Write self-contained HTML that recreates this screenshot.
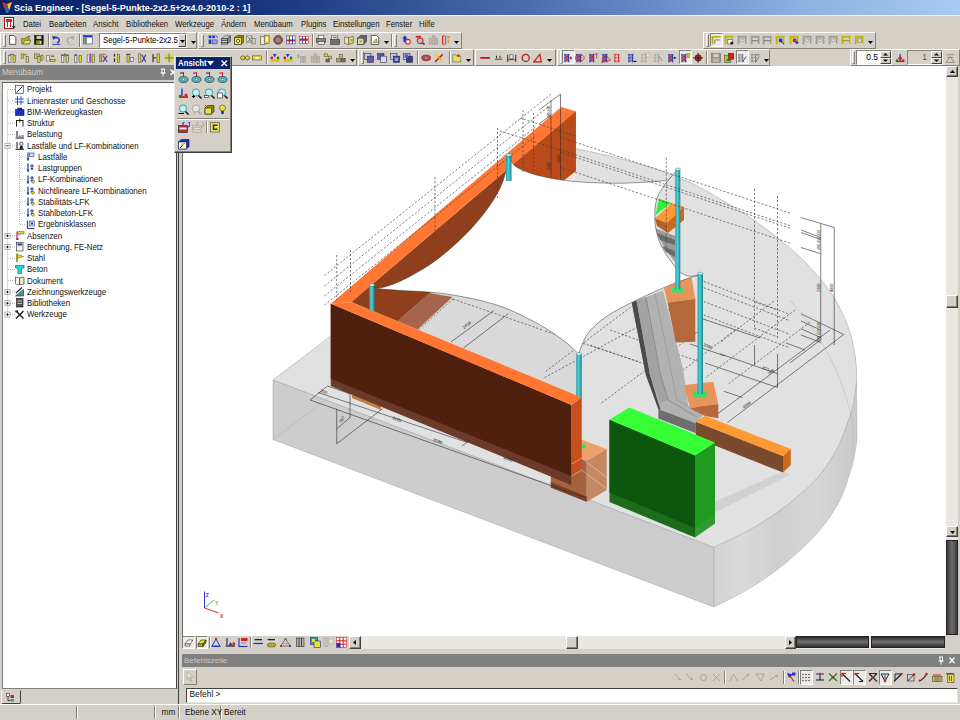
<!DOCTYPE html>
<html lang="de"><head><meta charset="utf-8"><title>Scia Engineer</title>
<style>
*{box-sizing:border-box;margin:0;padding:0}
html,body{width:960px;height:720px;overflow:hidden;background:#d4d0c8;font-family:"Liberation Sans",sans-serif;font-size:11px;color:#000}
.abs{position:absolute}
#title{left:0;top:0;width:960px;height:15px;background:linear-gradient(90deg,#0a246a 0%,#14317a 25%,#4a6db0 55%,#8fb4e4 85%,#a6caf0 100%);color:#fff;white-space:nowrap}
#title b{position:absolute;left:14px;top:0;font-size:9.8px;line-height:15px;transform:scaleX(.92);transform-origin:0 0;white-space:nowrap}
#menu{left:0;top:15px;width:960px;height:17px;background:#d4d0c8;border-top:1px solid #f4f2ee}
#menu span{position:absolute;top:2px;font-size:9px;line-height:12px;color:#111;white-space:nowrap;transform:scaleX(.86);transform-origin:0 0}
#leftp{left:0;top:66px;width:182px;height:640px;background:#d4d0c8}
#lhdr{left:0;top:66px;width:178px;height:13.5px;background:#808080;color:#d4d0c8;font-size:8.2px;line-height:13.5px;padding-left:2px}
#tree{left:2px;top:82px;width:175px;height:607px;background:#fff;border:1px solid #808080;border-right-color:#404040;border-top-color:#606060;overflow:hidden}
.ti{position:absolute;font-size:8.6px;line-height:12px;white-space:nowrap;color:#111;transform:scaleX(.92);transform-origin:0 50%}
.st{font-size:8.3px;line-height:12px;color:#111;white-space:nowrap}
#view{left:182px;top:66px;width:763.5px;height:569.5px;background:#fff;overflow:hidden;border-left:1px solid #6c6c6c}
</style></head><body>
<div class="abs" id="title"><b>Scia Engineer - [Segel-5-Punkte-2x2.5+2x4.0-2010-2 : 1]</b></div>
<svg class="abs" style="left:1px;top:1px" width="13" height="13" viewBox="0 0 13 13"><polygon points="1,1 6,3 4,9" fill="#e03020"/><polygon points="6,3 11,1 8,10" fill="#f0c020"/><polygon points="4,9 8,10 6,12.5" fill="#30a040"/><polygon points="6,3 8,10 4,9" fill="#3060d0"/></svg>
<div class="abs" id="menu">
<span style="left:23px">Datei</span><span style="left:48.5px">Bearbeiten</span><span style="left:93px">Ansicht</span><span style="left:125.5px">Bibliotheken</span><span style="left:174.5px">Werkzeuge</span><span style="left:221px">Ändern</span><span style="left:254px">Menübaum</span><span style="left:301px">Plugins</span><span style="left:333px">Einstellungen</span><span style="left:385.5px">Fenster</span><span style="left:419px">Hilfe</span>
</div>
<svg class="abs" style="left:4px;top:17px" width="12" height="13" viewBox="0 0 12 13"><rect x="0.5" y="0.5" width="9" height="11" fill="#fff" stroke="#802020" stroke-width="1"/><rect x="2" y="2" width="6" height="3" fill="#d02020"/><line x1="3.5" y1="5" x2="3.5" y2="10" stroke="#d02020"/><line x1="6.5" y1="5" x2="6.5" y2="10" stroke="#d02020"/><polygon points="8,9 11.5,9 9.8,12" fill="#222"/></svg>
<div class="abs" style="left:0px;top:32px;width:197px;height:17px;border:1px solid;border-color:#fff #848078 #848078 #fff"></div>
<div class="abs" style="left:198px;top:32px;width:264px;height:17px;border:1px solid;border-color:#fff #848078 #848078 #fff"></div>
<div class="abs" style="left:703px;top:32px;width:173px;height:17px;border:1px solid;border-color:#fff #848078 #848078 #fff"></div>
<div class="abs" style="left:0px;top:49px;width:357px;height:17px;border:1px solid;border-color:#fff #848078 #848078 #fff"></div>
<div class="abs" style="left:358px;top:49px;width:116px;height:17px;border:1px solid;border-color:#fff #848078 #848078 #fff"></div>
<div class="abs" style="left:475px;top:49px;width:81px;height:17px;border:1px solid;border-color:#fff #848078 #848078 #fff"></div>
<div class="abs" style="left:557px;top:49px;width:213px;height:17px;border:1px solid;border-color:#fff #848078 #848078 #fff"></div>
<div class="abs" style="left:850px;top:49px;width:110px;height:17px;border:1px solid;border-color:#fff #848078 #848078 #fff"></div>
<div class="abs" style="left:3px;top:34px;width:3px;height:13px;border-left:1px solid #fff;border-top:1px solid #fff;border-right:1px solid #848078;border-bottom:1px solid #848078"></div>
<div class="abs" style="left:3px;top:51px;width:3px;height:13px;border-left:1px solid #fff;border-top:1px solid #fff;border-right:1px solid #848078;border-bottom:1px solid #848078"></div>
<div class="abs" style="left:201px;top:34px;width:3px;height:13px;border-left:1px solid #fff;border-top:1px solid #fff;border-right:1px solid #848078;border-bottom:1px solid #848078"></div>
<div class="abs" style="left:706px;top:34px;width:3px;height:13px;border-left:1px solid #fff;border-top:1px solid #fff;border-right:1px solid #848078;border-bottom:1px solid #848078"></div>
<div class="abs" style="left:361px;top:51px;width:3px;height:13px;border-left:1px solid #fff;border-top:1px solid #fff;border-right:1px solid #848078;border-bottom:1px solid #848078"></div>
<div class="abs" style="left:560px;top:51px;width:3px;height:13px;border-left:1px solid #fff;border-top:1px solid #fff;border-right:1px solid #848078;border-bottom:1px solid #848078"></div>
<div class="abs" style="left:852px;top:51px;width:3px;height:13px;border-left:1px solid #fff;border-top:1px solid #fff;border-right:1px solid #848078;border-bottom:1px solid #848078"></div>
<svg class="abs" style="left:8px;top:34.8px;" width="10.3" height="9.8" viewBox="0 0 11 11"><polygon points="1.5,0.5 6,0.5 8.5,3 8.5,10.5 1.5,10.5" fill="#fff" stroke="#222" stroke-width="0.8"/></svg>
<svg class="abs" style="left:21px;top:34.8px;" width="10.3" height="9.8" viewBox="0 0 11 11"><polygon points="0.5,4 4,4 5,3 9,3 9,10 0.5,10" fill="#b8b820" stroke="#333" stroke-width="0.6"/><polygon points="2,10 4,6 11,6 9,10" fill="#e6e650" stroke="#333" stroke-width="0.6"/><line x1="7" y1="1.5" x2="10" y2="1.5" stroke="#333" stroke-width="0.8"/></svg>
<svg class="abs" style="left:34px;top:34.8px;" width="10.3" height="9.8" viewBox="0 0 11 11"><rect x="0.5" y="0.5" width="9.5" height="10" fill="#1a1a00" stroke="#000" stroke-width="0.6"/><rect x="2.5" y="1" width="5.5" height="3.5" fill="#c9c9c9"/><rect x="2" y="6" width="6.5" height="4.5" fill="#8a8a10"/><rect x="6" y="7" width="1.5" height="2.5" fill="#fff"/></svg>
<svg class="abs" style="left:52px;top:34.8px;" width="10.3" height="9.8" viewBox="0 0 11 11"><path d="M2,3.5 A3.6,3.2 0 1 1 5.5,9" fill="none" stroke="#1a2fb8" stroke-width="1.6"/><polygon points="0,1 4.5,2 1,5.5" fill="#1a2fb8"/><line x1="0.5" y1="10.5" x2="9" y2="10.5" stroke="#1a2fb8" stroke-width="1"/></svg>
<svg class="abs" style="left:65px;top:34.8px;" width="10.3" height="9.8" viewBox="0 0 11 11"><path d="M8,3.5 A3.6,3.2 0 1 0 4.5,9" fill="none" stroke="#a8a49c" stroke-width="1.5"/><polygon points="10,1 5.5,2 9,5.5" fill="#a8a49c"/><line x1="1" y1="10.5" x2="9.5" y2="10.5" stroke="#bdb9b0" stroke-width="1"/></svg>
<svg class="abs" style="left:83px;top:34.8px;" width="10.3" height="9.8" viewBox="0 0 11 11"><rect x="0.5" y="0.5" width="9.5" height="9.5" fill="#fff" stroke="#1428b0" stroke-width="0.6"/><rect x="0.5" y="0.5" width="9.5" height="2.2" fill="#1a33d0"/><rect x="1" y="2.7" width="3" height="7" fill="#7a7a7a"/></svg>
<div class="abs" style="left:47.5px;top:34px;width:2px;height:13px;border-left:1px solid #848078;border-right:1px solid #fff"></div>
<div class="abs" style="left:79px;top:34px;width:2px;height:13px;border-left:1px solid #848078;border-right:1px solid #fff"></div>
<div class="abs" style="left:99px;top:33px;width:88px;height:15px;background:#fff;border:1px solid;border-color:#848078 #fff #fff #848078;font-size:9px;line-height:13px;padding-left:3px;white-space:nowrap;overflow:hidden"><span style="display:inline-block;transform:scaleX(.86);transform-origin:0 0">Segel-5-Punkte-2x2.5</span></div>
<div class="abs" style="left:178px;top:34px;width:8px;height:13px;background:#d4d0c8;border:1px solid;border-color:#fff #404040 #404040 #fff"></div>
<svg class="abs" style="left:180px;top:40px" width="5" height="3" viewBox="0 0 5 3"><polygon points="0,0 5,0 2.5,3" fill="#000"/></svg>
<svg class="abs" style="left:190.5px;top:40.5px" width="5" height="3" viewBox="0 0 5 3"><polygon points="0,0 5,0 2.5,3" fill="#000"/></svg>
<svg class="abs" style="left:208px;top:34.8px;" width="10.3" height="9.8" viewBox="0 0 11 11"><rect x="0.5" y="0.5" width="3" height="3" fill="#2233cc"/><rect x="4.5" y="0.5" width="3" height="3" fill="#2233cc"/><rect x="0.5" y="5" width="3" height="5" fill="#2233cc"/><rect x="5" y="5.5" width="5" height="4.5" fill="#9aa0e0" stroke="#2233aa" stroke-width="0.6"/><line x1="8.5" y1="0.5" x2="10.5" y2="3" stroke="#2233cc" stroke-width="1"/></svg>
<svg class="abs" style="left:221px;top:34.8px;" width="10.3" height="9.8" viewBox="0 0 11 11"><polygon points="0.5,4 4,1 10.5,1 7,4" fill="#d8d8d8" stroke="#222" stroke-width="0.6"/><rect x="0.5" y="4" width="6.5" height="2" fill="#b0b0b0" stroke="#222" stroke-width="0.6"/><rect x="0.5" y="6.5" width="6.5" height="2" fill="#e8e8e8" stroke="#222" stroke-width="0.6"/><polygon points="7,4 10.5,1 10.5,7 7,10" fill="#888" stroke="#222" stroke-width="0.6"/><rect x="0.5" y="8.5" width="6.5" height="1.8" fill="#b0b0b0" stroke="#222" stroke-width="0.6"/></svg>
<svg class="abs" style="left:234px;top:34.8px;" width="10.3" height="9.8" viewBox="0 0 11 11"><polygon points="0.5,3 3,0.5 10.5,0.5 10.5,8 8,10.5 0.5,10.5" fill="#8a8a10" stroke="#221" stroke-width="0.6"/><rect x="0.5" y="3" width="7.5" height="7.5" fill="#e8e050" stroke="#221" stroke-width="0.6"/><circle cx="4.3" cy="6.7" r="1.8" fill="#fff" stroke="#222" stroke-width="0.8"/></svg>
<svg class="abs" style="left:246px;top:34.8px;" width="10.3" height="9.8" viewBox="0 0 11 11"><rect x="0.5" y="1" width="6" height="7" fill="#e8e6d8" stroke="#555" stroke-width="0.6"/><line x1="1.5" y1="2" x2="6" y2="8" stroke="#555" stroke-width="0.9"/><line x1="6" y1="2" x2="1.5" y2="8" stroke="#555" stroke-width="0.9"/><rect x="6.5" y="4" width="3.5" height="6" fill="#d4d0b0" stroke="#555" stroke-width="0.6"/></svg>
<svg class="abs" style="left:260px;top:34.8px;" width="10.3" height="9.8" viewBox="0 0 11 11"><rect x="0.5" y="2" width="5" height="8.5" fill="#e8e6e0" stroke="#444" stroke-width="0.6"/><rect x="5" y="0.5" width="5" height="9" fill="#e8d820" stroke="#554" stroke-width="0.6"/><rect x="6.5" y="2" width="2" height="5" fill="#fff"/></svg>
<svg class="abs" style="left:273px;top:34.8px;" width="10.3" height="9.8" viewBox="0 0 11 11"><circle cx="5.5" cy="5.5" r="5" fill="#a05048" stroke="#604038" stroke-width="0.8"/><circle cx="5.5" cy="5.5" r="2.8" fill="#8a8a88"/></svg>
<svg class="abs" style="left:286px;top:34.8px;" width="10.3" height="9.8" viewBox="0 0 11 11"><rect x="0.5" y="1" width="9.5" height="9" fill="#fff" stroke="#2233aa" stroke-width="0.6"/><rect x="0.5" y="5" width="9.5" height="2.2" fill="#d02020"/><line x1="3.5" y1="1" x2="3.5" y2="10" stroke="#2233aa" stroke-width="1"/><line x1="7" y1="1" x2="7" y2="10" stroke="#2233aa" stroke-width="1"/><rect x="1" y="1" width="2" height="2" fill="#e8d820"/></svg>
<svg class="abs" style="left:299px;top:34.8px;" width="10.3" height="9.8" viewBox="0 0 11 11"><rect x="0.5" y="1.5" width="9.5" height="8" fill="#fff" stroke="#d02020" stroke-width="0.6"/><rect x="0.5" y="4" width="9.5" height="2.5" fill="#d02020"/><line x1="3.5" y1="1.5" x2="3.5" y2="9.5" stroke="#2233aa" stroke-width="1"/><line x1="7" y1="1.5" x2="7" y2="9.5" stroke="#2233aa" stroke-width="1"/></svg>
<svg class="abs" style="left:316px;top:34.8px;" width="10.3" height="9.8" viewBox="0 0 11 11"><rect x="2.5" y="0.5" width="6" height="4" fill="#fff" stroke="#333" stroke-width="0.6"/><rect x="0.5" y="4" width="10" height="4.5" fill="#8a8a8a" stroke="#222" stroke-width="0.6"/><rect x="2" y="7.5" width="7" height="3" fill="#e8e8e8" stroke="#333" stroke-width="0.6"/></svg>
<svg class="abs" style="left:330px;top:34.8px;" width="10.3" height="9.8" viewBox="0 0 11 11"><rect x="1.5" y="1" width="7" height="5" fill="#e8e8e8" stroke="#333" stroke-width="0.6"/><rect x="0.5" y="5" width="10" height="5.5" fill="#707070" stroke="#222" stroke-width="0.6"/><line x1="3" y1="3" x2="7" y2="3" stroke="#333" stroke-width="0.8"/></svg>
<svg class="abs" style="left:344px;top:34.8px;" width="10.3" height="9.8" viewBox="0 0 11 11"><polygon points="0.5,2 5,3 5,10.5 0.5,9.5" fill="#f0e8b0" stroke="#332" stroke-width="0.6"/><polygon points="5,3 10,1.5 10,9 5,10.5" fill="#e8e080" stroke="#332" stroke-width="0.6"/><rect x="6.5" y="4.5" width="3" height="3" fill="#b8b020"/></svg>
<svg class="abs" style="left:357px;top:34.8px;" width="10.3" height="9.8" viewBox="0 0 11 11"><polygon points="0.5,3.5 3.5,0.5 10.5,0.5 10.5,7.5 7.5,10.5 0.5,10.5" fill="#6a6a6a" stroke="#222" stroke-width="0.6"/><rect x="0.5" y="3.5" width="7" height="7" fill="#d8d8c0" stroke="#222" stroke-width="0.6"/><rect x="2.5" y="5.5" width="3" height="3" fill="#c8c020"/></svg>
<svg class="abs" style="left:370px;top:34.8px;" width="10.3" height="9.8" viewBox="0 0 11 11"><polygon points="1,0.5 7,0.5 9.5,3 9.5,10.5 1,10.5" fill="#fff" stroke="#222" stroke-width="0.8"/><polygon points="3,8.5 7,4 8,8.5" fill="#d9d92a" stroke="#554" stroke-width="0.6"/></svg>
<svg class="abs" style="left:401px;top:34.8px;" width="10.3" height="9.8" viewBox="0 0 11 11"><polygon points="1,4 4,0.5 7,4 5.5,4 5.5,8 2.5,8 2.5,4" fill="#2233cc"/><circle cx="7.5" cy="7.5" r="2.6" fill="#fff" stroke="#d02020" stroke-width="1.2"/></svg>
<svg class="abs" style="left:414.5px;top:34.8px;" width="10.3" height="9.8" viewBox="0 0 11 11"><rect x="0.5" y="1" width="6" height="2" fill="#d02020"/><circle cx="5.5" cy="6.5" r="3.2" fill="#9ad0e0" stroke="#d02020" stroke-width="1.2"/><line x1="8" y1="9" x2="10.5" y2="10.5" stroke="#222" stroke-width="1.4"/></svg>
<svg class="abs" style="left:428px;top:34.8px;" width="10.3" height="9.8" viewBox="0 0 11 11"><rect x="1" y="3.5" width="2.4" height="7" fill="#bdb9b0" stroke="#9a968e" stroke-width="0.6"/><rect x="5" y="1" width="2.4" height="9.5" fill="#bdb9b0" stroke="#9a968e" stroke-width="0.6"/><rect x="8.2" y="3.5" width="2" height="7" fill="#bdb9b0" stroke="#9a968e" stroke-width="0.6"/></svg>
<svg class="abs" style="left:441px;top:34.8px;" width="10.3" height="9.8" viewBox="0 0 11 11"><line x1="1.5" y1="1" x2="1.5" y2="10.5" stroke="#d02020" stroke-width="1.2"/><line x1="1.5" y1="1" x2="4" y2="1" stroke="#d02020" stroke-width="1"/><line x1="1.5" y1="10.5" x2="4" y2="10.5" stroke="#d02020" stroke-width="1"/><line x1="5" y1="1" x2="5" y2="10.5" stroke="#555" stroke-width="1"/><rect x="7" y="1" width="2.5" height="2.5" fill="#d09020"/><line x1="8" y1="5" x2="8" y2="9" stroke="#d09020" stroke-width="1.2"/></svg>
<div class="abs" style="left:312px;top:34px;width:2px;height:13px;border-left:1px solid #848078;border-right:1px solid #fff"></div>
<svg class="abs" style="left:384px;top:41px" width="5" height="3" viewBox="0 0 5 3"><polygon points="0,0 5,0 2.5,3" fill="#000"/></svg>
<div class="abs" style="left:391px;top:34px;width:2px;height:13px;border-left:1px solid #848078;border-right:1px solid #fff"></div>
<div class="abs" style="left:394px;top:34px;width:3px;height:13px;border-left:1px solid #fff;border-top:1px solid #fff;border-right:1px solid #848078;border-bottom:1px solid #848078"></div>
<svg class="abs" style="left:454px;top:41px" width="5" height="3" viewBox="0 0 5 3"><polygon points="0,0 5,0 2.5,3" fill="#000"/></svg>
<div class="abs" style="left:710px;top:33px;width:13px;height:14px;background:#ecebe6;border:1px solid;border-color:#848078 #fff #fff #848078"></div>
<svg class="abs" style="left:711px;top:34.8px;" width="10.3" height="9.8" viewBox="0 0 11 11"><line x1="1.5" y1="1.5" x2="1.5" y2="10.5" stroke="#b8b800" stroke-width="2.1"/><line x1="0.5" y1="2" x2="10.5" y2="2" stroke="#b8b800" stroke-width="2.1"/><line x1="4" y1="5.5" x2="10" y2="5.5" stroke="#555" stroke-width="0.8"/><line x1="4" y1="5.5" x2="4" y2="10" stroke="#555" stroke-width="0.8"/></svg>
<svg class="abs" style="left:724px;top:34.8px;" width="10.3" height="9.8" viewBox="0 0 11 11"><line x1="1.5" y1="1.5" x2="1.5" y2="10.5" stroke="#b8b800" stroke-width="2.1"/><line x1="0.5" y1="2" x2="10.5" y2="2" stroke="#b8b800" stroke-width="2.1"/><rect x="4" y="5" width="5.5" height="5" fill="#fff" stroke="#333" stroke-width="0.6"/><circle cx="8.5" cy="9" r="1.8" fill="#223"/></svg>
<svg class="abs" style="left:736.5px;top:34.8px;" width="10.3" height="9.8" viewBox="0 0 11 11"><line x1="1.5" y1="1.5" x2="1.5" y2="10.5" stroke="#a09c94" stroke-width="2.1"/><line x1="0.5" y1="2" x2="10.5" y2="2" stroke="#a09c94" stroke-width="2.1"/><line x1="9.5" y1="2" x2="9.5" y2="10" stroke="#a09c94" stroke-width="1.6"/><rect x="4" y="4.5" width="3.5" height="3" fill="#e8e6e0" stroke="#8a8680" stroke-width="0.6"/></svg>
<svg class="abs" style="left:749.5px;top:34.8px;" width="10.3" height="9.8" viewBox="0 0 11 11"><line x1="1.5" y1="1.5" x2="1.5" y2="10.5" stroke="#a09c94" stroke-width="2.1"/><line x1="0.5" y1="2" x2="10.5" y2="2" stroke="#a09c94" stroke-width="2.1"/><line x1="9.5" y1="2" x2="9.5" y2="10" stroke="#a09c94" stroke-width="1.6"/><line x1="1.5" y1="6.5" x2="9.5" y2="6.5" stroke="#7a7670" stroke-width="1.2"/></svg>
<svg class="abs" style="left:762px;top:34.8px;" width="10.3" height="9.8" viewBox="0 0 11 11"><line x1="1.5" y1="1.5" x2="1.5" y2="10.5" stroke="#a09c94" stroke-width="2.1"/><line x1="0.5" y1="2" x2="10.5" y2="2" stroke="#a09c94" stroke-width="2.1"/><line x1="9.5" y1="2" x2="9.5" y2="10" stroke="#a09c94" stroke-width="1.6"/><line x1="1.5" y1="6.5" x2="9.5" y2="6.5" stroke="#7a7670" stroke-width="1.2"/></svg>
<svg class="abs" style="left:775px;top:34.8px;" width="10.3" height="9.8" viewBox="0 0 11 11"><line x1="1.5" y1="1.5" x2="1.5" y2="10.5" stroke="#b8b800" stroke-width="2.1"/><line x1="0.5" y1="2" x2="10.5" y2="2" stroke="#b8b800" stroke-width="2.1"/><rect x="4" y="4" width="4" height="4" fill="#2233cc"/><line x1="9.5" y1="2" x2="9.5" y2="10" stroke="#b8b800" stroke-width="1.4"/><line x1="6" y1="7" x2="10" y2="10.5" stroke="#222" stroke-width="1"/></svg>
<svg class="abs" style="left:788.5px;top:34.8px;" width="10.3" height="9.8" viewBox="0 0 11 11"><line x1="1.5" y1="1.5" x2="1.5" y2="10.5" stroke="#b8b800" stroke-width="2.1"/><line x1="0.5" y1="2" x2="10.5" y2="2" stroke="#b8b800" stroke-width="2.1"/><rect x="4" y="4" width="4" height="4" fill="#d02020"/><line x1="9.5" y1="2" x2="9.5" y2="10" stroke="#b8b800" stroke-width="1.4"/><circle cx="8.5" cy="8.5" r="1.6" fill="#2233cc"/></svg>
<svg class="abs" style="left:801.5px;top:34.8px;" width="10.3" height="9.8" viewBox="0 0 11 11"><line x1="1.5" y1="1.5" x2="1.5" y2="10.5" stroke="#a09c94" stroke-width="2.1"/><line x1="0.5" y1="2" x2="10.5" y2="2" stroke="#a09c94" stroke-width="2.1"/><line x1="9.5" y1="2" x2="9.5" y2="10" stroke="#a09c94" stroke-width="1.6"/><rect x="4" y="4.5" width="3.5" height="3" fill="#e8e6e0" stroke="#8a8680" stroke-width="0.6"/></svg>
<svg class="abs" style="left:814.5px;top:34.8px;" width="10.3" height="9.8" viewBox="0 0 11 11"><line x1="1.5" y1="1.5" x2="1.5" y2="10.5" stroke="#a09c94" stroke-width="2.1"/><line x1="0.5" y1="2" x2="10.5" y2="2" stroke="#a09c94" stroke-width="2.1"/><line x1="9.5" y1="2" x2="9.5" y2="10" stroke="#a09c94" stroke-width="1.6"/><rect x="4" y="4.5" width="3.5" height="3" fill="#e8e6e0" stroke="#8a8680" stroke-width="0.6"/></svg>
<svg class="abs" style="left:827.5px;top:34.8px;" width="10.3" height="9.8" viewBox="0 0 11 11"><line x1="1.5" y1="1.5" x2="1.5" y2="10.5" stroke="#a09c94" stroke-width="2.1"/><line x1="0.5" y1="2" x2="10.5" y2="2" stroke="#a09c94" stroke-width="2.1"/><line x1="9.5" y1="2" x2="9.5" y2="10" stroke="#a09c94" stroke-width="1.6"/><rect x="4" y="4.5" width="3.5" height="3" fill="#e8e6e0" stroke="#8a8680" stroke-width="0.6"/></svg>
<svg class="abs" style="left:840.5px;top:34.8px;" width="10.3" height="9.8" viewBox="0 0 11 11"><line x1="1.5" y1="1.5" x2="1.5" y2="10.5" stroke="#b8b800" stroke-width="2.1"/><line x1="0.5" y1="2" x2="10.5" y2="2" stroke="#b8b800" stroke-width="2.1"/><line x1="9.5" y1="2" x2="9.5" y2="10" stroke="#b8b800" stroke-width="1.4"/><line x1="1.5" y1="6.5" x2="9.5" y2="6.5" stroke="#8a8a00" stroke-width="1"/></svg>
<svg class="abs" style="left:854px;top:34.8px;" width="10.3" height="9.8" viewBox="0 0 11 11"><line x1="1.5" y1="1.5" x2="1.5" y2="10.5" stroke="#b8b800" stroke-width="2.1"/><line x1="0.5" y1="2" x2="10.5" y2="2" stroke="#b8b800" stroke-width="2.1"/><line x1="9.5" y1="2" x2="9.5" y2="10" stroke="#b8b800" stroke-width="1.4"/><rect x="3.5" y="4" width="4.5" height="4.5" fill="#d4d0c8" stroke="#777" stroke-width="0.6"/></svg>
<svg class="abs" style="left:867.5px;top:41px" width="5" height="3" viewBox="0 0 5 3"><polygon points="0,0 5,0 2.5,3" fill="#000"/></svg>
<div class="abs" style="left:561.5px;top:50px;width:13px;height:14px;background:#ecebe6;border:1px solid;border-color:#848078 #fff #fff #848078"></div>
<div class="abs" style="left:679px;top:50px;width:13px;height:14px;background:#ecebe6;border:1px solid;border-color:#848078 #fff #fff #848078"></div>
<div class="abs" style="left:735.5px;top:50px;width:13px;height:14px;background:#ecebe6;border:1px solid;border-color:#848078 #fff #fff #848078"></div>
<svg class="abs" style="left:7px;top:52.8px;" width="10.3" height="9.8" viewBox="0 0 11 11"><rect x="1.5" y="3" width="2.6" height="7.5" fill="#e9e9d0" stroke="#444" stroke-width="0.6"/><rect x="6.5" y="3" width="2.6" height="7.5" fill="#d9d92a" stroke="#444" stroke-width="0.6"/><line x1="2.5" y1="1.5" x2="8" y2="1.5" stroke="#444" stroke-width="0.8"/></svg>
<svg class="abs" style="left:20px;top:52.8px;" width="10.3" height="9.8" viewBox="0 0 11 11"><rect x="1" y="1" width="2.6" height="5" fill="#d9d92a" stroke="#444" stroke-width="0.6"/><rect x="6.5" y="4" width="2.6" height="6.5" fill="#d9d92a" stroke="#444" stroke-width="0.6"/><line x1="4" y1="2" x2="7" y2="2" stroke="#333" stroke-width="0.8"/></svg>
<svg class="abs" style="left:33.5px;top:52.8px;" width="10.3" height="9.8" viewBox="0 0 11 11"><rect x="0.5" y="1" width="2.6" height="5" fill="#d9d92a" stroke="#444" stroke-width="0.6"/><rect x="4" y="4" width="2.6" height="6.5" fill="#d9d92a" stroke="#444" stroke-width="0.6"/><rect x="7.5" y="3" width="2.4" height="5" fill="#d9d92a" stroke="#444" stroke-width="0.6"/><line x1="5.5" y1="0.5" x2="5.5" y2="3" stroke="#22c" stroke-width="1"/></svg>
<svg class="abs" style="left:46px;top:52.8px;" width="10.3" height="9.8" viewBox="0 0 11 11"><rect x="0.5" y="3" width="3" height="6" fill="#e9e9d0" stroke="#555" stroke-width="0.6"/><rect x="4.5" y="7" width="5.5" height="2.5" fill="#d9d92a" stroke="#444" stroke-width="0.6"/><line x1="5" y1="3.5" x2="9" y2="3.5" stroke="#333" stroke-width="1"/></svg>
<svg class="abs" style="left:59.5px;top:52.8px;" width="10.3" height="9.8" viewBox="0 0 11 11"><rect x="1.5" y="3" width="2.6" height="7.5" fill="#e4e4d8" stroke="#444" stroke-width="0.6"/><rect x="6.5" y="3" width="2.6" height="7.5" fill="#d9d92a" stroke="#444" stroke-width="0.6"/><line x1="1" y1="2" x2="9.5" y2="2" stroke="#444" stroke-width="0.8"/><line x1="5" y1="0.5" x2="5" y2="4" stroke="#444" stroke-width="0.8"/></svg>
<svg class="abs" style="left:72.5px;top:52.8px;" width="10.3" height="9.8" viewBox="0 0 11 11"><rect x="1.5" y="3" width="2.6" height="7.5" fill="#e4e4d8" stroke="#444" stroke-width="0.6"/><rect x="6.5" y="3" width="2.6" height="7.5" fill="#d9d92a" stroke="#444" stroke-width="0.6"/><circle cx="2.8" cy="1.8" r="1" fill="#33c"/></svg>
<svg class="abs" style="left:85.5px;top:52.8px;" width="10.3" height="9.8" viewBox="0 0 11 11"><rect x="1" y="2" width="2.6" height="8.5" fill="#e4e4d8" stroke="#444" stroke-width="0.6"/><rect x="6.5" y="2" width="2.6" height="8.5" fill="#d9d92a" stroke="#444" stroke-width="0.6"/><line x1="5" y1="0.5" x2="5" y2="11" stroke="#a030c0" stroke-width="1.2"/></svg>
<svg class="abs" style="left:98.5px;top:52.8px;" width="10.3" height="9.8" viewBox="0 0 11 11"><rect x="0.5" y="2" width="2.4" height="8" fill="#b0b040" stroke="#555" stroke-width="0.6"/><line x1="4" y1="3" x2="9" y2="10" stroke="#44a" stroke-width="1.2"/><line x1="9" y1="3" x2="4" y2="10" stroke="#44a" stroke-width="1.2"/><line x1="3" y1="1.5" x2="7" y2="1.5" stroke="#c33" stroke-width="1"/></svg>
<svg class="abs" style="left:111.5px;top:52.8px;" width="10.3" height="9.8" viewBox="0 0 11 11"><rect x="6" y="1.5" width="2.4" height="9" fill="#d9d92a" stroke="#444" stroke-width="0.6"/><line x1="2.5" y1="1" x2="2.5" y2="4" stroke="#222" stroke-width="1.4"/><line x1="2.5" y1="6" x2="2.5" y2="10" stroke="#222" stroke-width="1.4"/></svg>
<svg class="abs" style="left:125px;top:52.8px;" width="10.3" height="9.8" viewBox="0 0 11 11"><rect x="2" y="1.5" width="2.4" height="9" fill="#d9d92a" stroke="#444" stroke-width="0.6"/><rect x="5.5" y="5" width="3.5" height="4.5" fill="#e4e4ff" stroke="#33a" stroke-width="0.6"/><line x1="1" y1="1.5" x2="6" y2="1.5" stroke="#222" stroke-width="0.8"/></svg>
<svg class="abs" style="left:138px;top:52.8px;" width="10.3" height="9.8" viewBox="0 0 11 11"><rect x="0.5" y="1" width="2.4" height="9.5" fill="#d9d92a" stroke="#444" stroke-width="0.6"/><line x1="4" y1="2" x2="8.5" y2="10" stroke="#339" stroke-width="1.2"/><line x1="8.5" y1="2" x2="4" y2="10" stroke="#339" stroke-width="1.2"/></svg>
<svg class="abs" style="left:151px;top:52.8px;" width="10.3" height="9.8" viewBox="0 0 11 11"><rect x="6.5" y="1" width="2.6" height="10" fill="#d9d92a" stroke="#444" stroke-width="0.6"/><line x1="2" y1="1" x2="2" y2="10.5" stroke="#222" stroke-width="1.2"/><line x1="2" y1="5.5" x2="6" y2="5.5" stroke="#222" stroke-width="1"/></svg>
<svg class="abs" style="left:164px;top:52.8px;" width="10.3" height="9.8" viewBox="0 0 11 11"><line x1="0.5" y1="5.5" x2="10.5" y2="5.5" stroke="#8a8a00" stroke-width="1.4"/><line x1="5.5" y1="0.5" x2="5.5" y2="10.5" stroke="#8a8a00" stroke-width="1.4"/><rect x="1" y="1.5" width="3" height="2.5" fill="#d9d92a"/><rect x="7" y="1.5" width="3" height="2.5" fill="#d9d92a"/><rect x="1" y="7" width="3" height="2.5" fill="#d9d92a"/><rect x="7" y="7" width="3" height="2.5" fill="#d9d92a"/></svg>
<svg class="abs" style="left:240px;top:52.8px;" width="10.3" height="9.8" viewBox="0 0 11 11"><circle cx="2.7" cy="5.5" r="2.3" fill="#e9d820" stroke="#444" stroke-width="0.8"/><circle cx="8" cy="5.5" r="2.3" fill="#e9d820" stroke="#444" stroke-width="0.8"/></svg>
<svg class="abs" style="left:252px;top:52.8px;" width="10.3" height="9.8" viewBox="0 0 11 11"><rect x="0.5" y="3.2" width="10" height="4.6" fill="#e9d820" stroke="#444" stroke-width="0.6"/><rect x="3.5" y="4.4" width="4" height="2.2" fill="#f8f8f8"/></svg>
<svg class="abs" style="left:270px;top:52.8px;" width="10.3" height="9.8" viewBox="0 0 11 11"><line x1="0.5" y1="8.5" x2="10.5" y2="8.5" stroke="#e0c000" stroke-width="2.4"/><polygon points="3,1 7,1 5,5" fill="#2233cc"/><rect x="0.5" y="4" width="2.5" height="3" fill="#c02020"/><rect x="7.5" y="4" width="2.5" height="3" fill="#208020"/></svg>
<svg class="abs" style="left:283px;top:52.8px;" width="10.3" height="9.8" viewBox="0 0 11 11"><line x1="0.5" y1="8.5" x2="10.5" y2="8.5" stroke="#e0c000" stroke-width="2.4"/><polygon points="3,1 7,1 5,5" fill="#2233cc"/><rect x="0.5" y="4" width="2.5" height="3" fill="#c02020"/><rect x="7.5" y="4" width="2.5" height="3" fill="#208020"/></svg>
<svg class="abs" style="left:296px;top:52.8px;" width="10.3" height="9.8" viewBox="0 0 11 11"><rect x="1" y="1.5" width="2.5" height="4" fill="#a8a49c"/><rect x="5" y="4" width="2.2" height="6.5" fill="#bdb9b0" stroke="#9a968e" stroke-width="0.6"/><rect x="8" y="4" width="2.2" height="6.5" fill="#bdb9b0" stroke="#9a968e" stroke-width="0.6"/></svg>
<svg class="abs" style="left:309.5px;top:52.8px;" width="10.3" height="9.8" viewBox="0 0 11 11"><rect x="1" y="3.5" width="2.4" height="7" fill="#bdb9b0" stroke="#9a968e" stroke-width="0.6"/><rect x="5" y="1" width="2.4" height="9.5" fill="#bdb9b0" stroke="#9a968e" stroke-width="0.6"/><rect x="8.2" y="3.5" width="2" height="7" fill="#bdb9b0" stroke="#9a968e" stroke-width="0.6"/></svg>
<svg class="abs" style="left:323px;top:52.8px;" width="10.3" height="9.8" viewBox="0 0 11 11"><rect x="1" y="1" width="3.5" height="3" fill="#d9d92a" stroke="#444" stroke-width="0.6"/><rect x="5.5" y="3.5" width="3.5" height="3" fill="#d9d92a" stroke="#444" stroke-width="0.6"/><rect x="3" y="7" width="4" height="3" fill="#707060" stroke="#333" stroke-width="0.6"/></svg>
<svg class="abs" style="left:336px;top:52.8px;" width="10.3" height="9.8" viewBox="0 0 11 11"><rect x="0.5" y="6" width="4" height="4" fill="#b0b040" stroke="#444" stroke-width="0.6"/><rect x="5.5" y="6" width="4.5" height="4" fill="#707070" stroke="#333" stroke-width="0.6"/><rect x="3.5" y="1.5" width="3.5" height="3" fill="#d9d92a" stroke="#444" stroke-width="0.6"/></svg>
<svg class="abs" style="left:364px;top:52.8px;" width="10.3" height="9.8" viewBox="0 0 11 11"><rect x="0.5" y="0.5" width="7" height="7" fill="#c8c8e8" stroke="#223" stroke-width="0.6"/><rect x="3.5" y="3.5" width="7" height="7" fill="#5a5ab0" stroke="#223" stroke-width="0.6"/></svg>
<svg class="abs" style="left:377px;top:52.8px;" width="10.3" height="9.8" viewBox="0 0 11 11"><rect x="0.5" y="0.5" width="7" height="7" fill="#5a5ab0" stroke="#223" stroke-width="0.6"/><rect x="3.5" y="3.5" width="7" height="7" fill="#d8d8f0" stroke="#223" stroke-width="0.6"/></svg>
<svg class="abs" style="left:390px;top:52.8px;" width="10.3" height="9.8" viewBox="0 0 11 11"><rect x="0.5" y="0.5" width="7" height="7" fill="#c8c8e8" stroke="#223" stroke-width="0.6"/><rect x="3.5" y="3.5" width="7" height="7" fill="#3a3a98" stroke="#223" stroke-width="0.6"/><rect x="5" y="5" width="4" height="4" fill="#9a9ad8"/></svg>
<svg class="abs" style="left:403px;top:52.8px;" width="10.3" height="9.8" viewBox="0 0 11 11"><rect x="0.5" y="0.5" width="7" height="7" fill="#c8c8e8" stroke="#223" stroke-width="0.6"/><rect x="3.5" y="3.5" width="7" height="7" fill="#3a3a98" stroke="#223" stroke-width="0.6"/><rect x="1.5" y="1.5" width="4" height="4" fill="#5a5ab0"/></svg>
<svg class="abs" style="left:420.5px;top:52.8px;" width="10.3" height="9.8" viewBox="0 0 11 11"><ellipse cx="5.5" cy="5.5" rx="5" ry="3.2" fill="#c04040" stroke="#702020" stroke-width="0.6"/><circle cx="5.5" cy="5.5" r="1.6" fill="#7a9ab0"/></svg>
<svg class="abs" style="left:434px;top:52.8px;" width="10.3" height="9.8" viewBox="0 0 11 11"><line x1="1" y1="10" x2="9.5" y2="1.5" stroke="#d02020" stroke-width="1.8"/><line x1="2" y1="2" x2="8" y2="8" stroke="#e0b000" stroke-width="1.6"/><circle cx="3" cy="3" r="1.5" fill="#e8d820"/></svg>
<svg class="abs" style="left:452px;top:52.8px;" width="10.3" height="9.8" viewBox="0 0 11 11"><polygon points="0.5,2 4,2 5,3.5 9.5,3.5 9.5,10 0.5,10" fill="#e6e060" stroke="#554" stroke-width="0.6"/><circle cx="7" cy="3" r="1.6" fill="#d03030"/></svg>
<svg class="abs" style="left:480px;top:52.8px;" width="10.3" height="9.8" viewBox="0 0 11 11"><line x1="0" y1="5.5" x2="11" y2="5.5" stroke="#c01818" stroke-width="2"/></svg>
<svg class="abs" style="left:494px;top:52.8px;" width="10.3" height="9.8" viewBox="0 0 11 11"><line x1="0.5" y1="7" x2="9" y2="7" stroke="#802020" stroke-width="1"/><line x1="2.5" y1="3" x2="2.5" y2="6" stroke="#333" stroke-width="1.2"/><line x1="6.5" y1="3" x2="6.5" y2="6" stroke="#333" stroke-width="1.2"/></svg>
<svg class="abs" style="left:507px;top:52.8px;" width="10.3" height="9.8" viewBox="0 0 11 11"><line x1="0.5" y1="2" x2="0.5" y2="10" stroke="#802020" stroke-width="1.2"/><line x1="9.5" y1="2" x2="9.5" y2="10" stroke="#802020" stroke-width="1.2"/><line x1="0.5" y1="7.5" x2="9.5" y2="7.5" stroke="#c01818" stroke-width="1.2"/><rect x="3" y="2" width="3.5" height="4" fill="#f0f0f0" stroke="#333" stroke-width="0.6"/></svg>
<svg class="abs" style="left:520.5px;top:52.8px;" width="10.3" height="9.8" viewBox="0 0 11 11"><circle cx="5" cy="5.5" r="4" fill="none" stroke="#b01818" stroke-width="1.4"/></svg>
<svg class="abs" style="left:533px;top:52.8px;" width="10.3" height="9.8" viewBox="0 0 11 11"><polygon points="0.5,10 9,10 7.5,1.5" fill="none" stroke="#c01818" stroke-width="1.3"/></svg>
<svg class="abs" style="left:563px;top:52.8px;" width="10.3" height="9.8" viewBox="0 0 11 11"><line x1="2" y1="1" x2="2" y2="10.5" stroke="#2233aa" stroke-width="1.1"/><line x1="6" y1="1" x2="6" y2="10.5" stroke="#2233aa" stroke-width="1.1"/><line x1="1" y1="2" x2="7" y2="2" stroke="#2233aa" stroke-width="1"/><line x1="1" y1="5.5" x2="7" y2="5.5" stroke="#2233aa" stroke-width="1"/><line x1="1" y1="9" x2="7" y2="9" stroke="#2233aa" stroke-width="1"/><rect x="2.6" y="2.6" width="2.8" height="2.2" fill="#d02020"/><rect x="2.6" y="6.2" width="2.8" height="2.2" fill="#d02020"/><polygon points="7.5,3.5 10.5,5.5 7.5,7.5" fill="#d02020"/></svg>
<svg class="abs" style="left:575px;top:52.8px;" width="10.3" height="9.8" viewBox="0 0 11 11"><line x1="2" y1="1" x2="2" y2="10.5" stroke="#2233aa" stroke-width="1.1"/><line x1="6" y1="1" x2="6" y2="10.5" stroke="#2233aa" stroke-width="1.1"/><line x1="1" y1="2" x2="7" y2="2" stroke="#2233aa" stroke-width="1"/><line x1="1" y1="5.5" x2="7" y2="5.5" stroke="#2233aa" stroke-width="1"/><line x1="1" y1="9" x2="7" y2="9" stroke="#2233aa" stroke-width="1"/><rect x="2.6" y="2.6" width="2.8" height="2.2" fill="#d02020"/><rect x="2.6" y="6.2" width="2.8" height="2.2" fill="#d02020"/><ellipse cx="5" cy="5.5" rx="5" ry="3.5" fill="none" stroke="#d02020" stroke-width="0.9"/></svg>
<svg class="abs" style="left:588px;top:52.8px;" width="10.3" height="9.8" viewBox="0 0 11 11"><line x1="2" y1="1" x2="2" y2="10.5" stroke="#2233aa" stroke-width="1.1"/><line x1="6" y1="1" x2="6" y2="10.5" stroke="#2233aa" stroke-width="1.1"/><line x1="1" y1="2" x2="7" y2="2" stroke="#2233aa" stroke-width="1"/><line x1="1" y1="5.5" x2="7" y2="5.5" stroke="#2233aa" stroke-width="1"/><line x1="1" y1="9" x2="7" y2="9" stroke="#2233aa" stroke-width="1"/><rect x="2.6" y="2.6" width="2.8" height="2.2" fill="#d02020"/><rect x="2.6" y="6.2" width="2.8" height="2.2" fill="#d02020"/><line x1="8" y1="1" x2="10.5" y2="1" stroke="#2233aa" stroke-width="1"/><line x1="9.5" y1="1" x2="9.5" y2="6" stroke="#d02020" stroke-width="1"/></svg>
<svg class="abs" style="left:601px;top:52.8px;" width="10.3" height="9.8" viewBox="0 0 11 11"><line x1="2" y1="1" x2="2" y2="10.5" stroke="#2233aa" stroke-width="1.1"/><line x1="6" y1="1" x2="6" y2="10.5" stroke="#2233aa" stroke-width="1.1"/><line x1="1" y1="2" x2="7" y2="2" stroke="#2233aa" stroke-width="1"/><line x1="1" y1="5.5" x2="7" y2="5.5" stroke="#2233aa" stroke-width="1"/><line x1="1" y1="9" x2="7" y2="9" stroke="#2233aa" stroke-width="1"/><rect x="2.6" y="2.6" width="2.8" height="2.2" fill="#d02020"/><rect x="2.6" y="6.2" width="2.8" height="2.2" fill="#d02020"/><polygon points="0.5,10.5 5,2 10.5,8" fill="none" stroke="#d02020" stroke-width="0.9"/></svg>
<svg class="abs" style="left:613px;top:52.8px;" width="10.3" height="9.8" viewBox="0 0 11 11"><line x1="2" y1="1" x2="2" y2="10.5" stroke="#d02020" stroke-width="1.1"/><line x1="6" y1="1" x2="6" y2="10.5" stroke="#d02020" stroke-width="1.1"/><line x1="1" y1="2" x2="7" y2="2" stroke="#d02020" stroke-width="1"/><line x1="1" y1="5.5" x2="7" y2="5.5" stroke="#d02020" stroke-width="1"/><line x1="1" y1="9" x2="7" y2="9" stroke="#d02020" stroke-width="1"/><rect x="2.6" y="2.6" width="2.8" height="2.2" fill="#f8c0c0"/><rect x="2.6" y="6.2" width="2.8" height="2.2" fill="#f8c0c0"/></svg>
<svg class="abs" style="left:627px;top:52.8px;" width="10.3" height="9.8" viewBox="0 0 11 11"><line x1="2" y1="1" x2="2" y2="10.5" stroke="#2233aa" stroke-width="1.1"/><line x1="6" y1="1" x2="6" y2="10.5" stroke="#2233aa" stroke-width="1.1"/><line x1="1" y1="2" x2="7" y2="2" stroke="#2233aa" stroke-width="1"/><line x1="1" y1="5.5" x2="7" y2="5.5" stroke="#2233aa" stroke-width="1"/><line x1="1" y1="9" x2="7" y2="9" stroke="#2233aa" stroke-width="1"/><rect x="2.6" y="2.6" width="2.8" height="2.2" fill="#8090d0"/><rect x="2.6" y="6.2" width="2.8" height="2.2" fill="#8090d0"/><line x1="7" y1="9.5" x2="10.5" y2="9.5" stroke="#222" stroke-width="1.3"/></svg>
<svg class="abs" style="left:640px;top:52.8px;" width="10.3" height="9.8" viewBox="0 0 11 11"><line x1="2" y1="1" x2="2" y2="10.5" stroke="#a8a49c" stroke-width="1.1"/><line x1="6" y1="1" x2="6" y2="10.5" stroke="#a8a49c" stroke-width="1.1"/><line x1="1" y1="2" x2="7" y2="2" stroke="#a8a49c" stroke-width="1"/><line x1="1" y1="5.5" x2="7" y2="5.5" stroke="#a8a49c" stroke-width="1"/><line x1="1" y1="9" x2="7" y2="9" stroke="#a8a49c" stroke-width="1"/><rect x="2.6" y="2.6" width="2.8" height="2.2" fill="#d4d0c8"/><rect x="2.6" y="6.2" width="2.8" height="2.2" fill="#d4d0c8"/><rect x="7" y="1" width="3.5" height="3.5" fill="#e8e6e0" stroke="#a8a49c" stroke-width="0.6"/></svg>
<svg class="abs" style="left:653px;top:52.8px;" width="10.3" height="9.8" viewBox="0 0 11 11"><line x1="2" y1="1" x2="2" y2="10.5" stroke="#a8a49c" stroke-width="1.1"/><line x1="6" y1="1" x2="6" y2="10.5" stroke="#a8a49c" stroke-width="1.1"/><line x1="1" y1="2" x2="7" y2="2" stroke="#a8a49c" stroke-width="1"/><line x1="1" y1="5.5" x2="7" y2="5.5" stroke="#a8a49c" stroke-width="1"/><line x1="1" y1="9" x2="7" y2="9" stroke="#a8a49c" stroke-width="1"/><rect x="2.6" y="2.6" width="2.8" height="2.2" fill="#d4d0c8"/><rect x="2.6" y="6.2" width="2.8" height="2.2" fill="#d4d0c8"/><line x1="6" y1="3" x2="10" y2="9" stroke="#8a8680" stroke-width="1"/></svg>
<svg class="abs" style="left:667px;top:52.8px;" width="10.3" height="9.8" viewBox="0 0 11 11"><line x1="2" y1="1" x2="2" y2="10.5" stroke="#2233aa" stroke-width="1.1"/><line x1="6" y1="1" x2="6" y2="10.5" stroke="#2233aa" stroke-width="1.1"/><line x1="1" y1="2" x2="7" y2="2" stroke="#2233aa" stroke-width="1"/><line x1="1" y1="5.5" x2="7" y2="5.5" stroke="#2233aa" stroke-width="1"/><line x1="1" y1="9" x2="7" y2="9" stroke="#2233aa" stroke-width="1"/><rect x="2.6" y="2.6" width="2.8" height="2.2" fill="#d02020"/><rect x="2.6" y="6.2" width="2.8" height="2.2" fill="#d02020"/><polygon points="7.5,4 10.5,5.5 7.5,7" fill="#223"/></svg>
<svg class="abs" style="left:680px;top:52.8px;" width="10.3" height="9.8" viewBox="0 0 11 11"><line x1="2" y1="1" x2="2" y2="10.5" stroke="#2233aa" stroke-width="1.1"/><line x1="6" y1="1" x2="6" y2="10.5" stroke="#2233aa" stroke-width="1.1"/><line x1="1" y1="2" x2="7" y2="2" stroke="#2233aa" stroke-width="1"/><line x1="1" y1="5.5" x2="7" y2="5.5" stroke="#2233aa" stroke-width="1"/><line x1="1" y1="9" x2="7" y2="9" stroke="#2233aa" stroke-width="1"/><rect x="2.6" y="2.6" width="2.8" height="2.2" fill="#d02020"/><rect x="2.6" y="6.2" width="2.8" height="2.2" fill="#d02020"/><rect x="7.5" y="0.5" width="3.5" height="4.5" fill="#c8d020" stroke="#776" stroke-width="0.6"/></svg>
<svg class="abs" style="left:692.5px;top:52.8px;" width="10.3" height="9.8" viewBox="0 0 11 11"><circle cx="5.5" cy="5.5" r="3.6" fill="#d02020" stroke="#501010" stroke-width="0.8"/><line x1="5.5" y1="0" x2="5.5" y2="11" stroke="#222" stroke-width="1.1"/><line x1="0" y1="5.5" x2="11" y2="5.5" stroke="#222" stroke-width="1.1"/></svg>
<svg class="abs" style="left:710.5px;top:52.8px;" width="10.3" height="9.8" viewBox="0 0 11 11"><rect x="0.5" y="0.5" width="10" height="10" fill="#9a968e" stroke="#6a665e" stroke-width="0.6"/><rect x="2.5" y="1" width="5.5" height="3.5" fill="#d4d0c8"/><rect x="2" y="6" width="6.5" height="4.5" fill="#b8b4ac"/></svg>
<svg class="abs" style="left:723.5px;top:52.8px;" width="10.3" height="9.8" viewBox="0 0 11 11"><rect x="0.5" y="3" width="7" height="7.5" fill="#c8c020" stroke="#443" stroke-width="0.6"/><rect x="5" y="0.5" width="5.5" height="6.5" fill="#d02020" stroke="#501010" stroke-width="0.6"/><polygon points="2,9 5,5 7,9" fill="#208020"/></svg>
<svg class="abs" style="left:737px;top:52.8px;" width="10.3" height="9.8" viewBox="0 0 11 11"><line x1="2" y1="1" x2="2" y2="10.5" stroke="#6a7a8a" stroke-width="1.1"/><line x1="6" y1="1" x2="6" y2="10.5" stroke="#6a7a8a" stroke-width="1.1"/><line x1="1" y1="2" x2="7" y2="2" stroke="#6a7a8a" stroke-width="1"/><line x1="1" y1="5.5" x2="7" y2="5.5" stroke="#6a7a8a" stroke-width="1"/><line x1="1" y1="9" x2="7" y2="9" stroke="#6a7a8a" stroke-width="1"/><rect x="2.6" y="2.6" width="2.8" height="2.2" fill="#b8b4ac"/><rect x="2.6" y="6.2" width="2.8" height="2.2" fill="#b8b4ac"/><line x1="6" y1="10" x2="10" y2="4" stroke="#445" stroke-width="1"/></svg>
<svg class="abs" style="left:750px;top:52.8px;" width="10.3" height="9.8" viewBox="0 0 11 11"><line x1="2" y1="1" x2="2" y2="10.5" stroke="#8a8680" stroke-width="1.1"/><line x1="6" y1="1" x2="6" y2="10.5" stroke="#8a8680" stroke-width="1.1"/><line x1="1" y1="2" x2="7" y2="2" stroke="#8a8680" stroke-width="1"/><line x1="1" y1="5.5" x2="7" y2="5.5" stroke="#8a8680" stroke-width="1"/><line x1="1" y1="9" x2="7" y2="9" stroke="#8a8680" stroke-width="1"/><rect x="2.6" y="2.6" width="2.8" height="2.2" fill="#c8c4bc"/><rect x="2.6" y="6.2" width="2.8" height="2.2" fill="#c8c4bc"/><line x1="6" y1="10" x2="10" y2="4" stroke="#667" stroke-width="1"/><line x1="7" y1="2" x2="10.5" y2="2" stroke="#667" stroke-width="1"/></svg>
<svg class="abs" style="left:895px;top:52.8px;" width="10.3" height="9.8" viewBox="0 0 11 11"><line x1="5.5" y1="1" x2="5.5" y2="9" stroke="#2233cc" stroke-width="1.3"/><line x1="1" y1="9.5" x2="10" y2="9.5" stroke="#d02020" stroke-width="1.6"/><circle cx="5.5" cy="6" r="2" fill="#d02020"/><circle cx="2" cy="8.5" r="1.4" fill="#208020"/><circle cx="9" cy="8.5" r="1.4" fill="#d02020"/></svg>
<svg class="abs" style="left:945px;top:52.8px;" width="10.3" height="9.8" viewBox="0 0 11 11"><line x1="1" y1="2" x2="10" y2="2" stroke="#8a8680" stroke-width="1"/><line x1="2" y1="5" x2="9" y2="5" stroke="#8a8680" stroke-width="1"/><polygon points="1,10.5 5.5,4 10,10.5" fill="none" stroke="#8a8680" stroke-width="1"/></svg>
<div class="abs" style="left:266px;top:51px;width:2px;height:13px;border-left:1px solid #848078;border-right:1px solid #fff"></div>
<div class="abs" style="left:417px;top:51px;width:2px;height:13px;border-left:1px solid #848078;border-right:1px solid #fff"></div>
<div class="abs" style="left:449px;top:51px;width:2px;height:13px;border-left:1px solid #848078;border-right:1px solid #fff"></div>
<div class="abs" style="left:706px;top:51px;width:2px;height:13px;border-left:1px solid #848078;border-right:1px solid #fff"></div>
<svg class="abs" style="left:350px;top:59px" width="5" height="3" viewBox="0 0 5 3"><polygon points="0,0 5,0 2.5,3" fill="#000"/></svg>
<svg class="abs" style="left:466px;top:59px" width="5" height="3" viewBox="0 0 5 3"><polygon points="0,0 5,0 2.5,3" fill="#000"/></svg>
<svg class="abs" style="left:547px;top:59px" width="5" height="3" viewBox="0 0 5 3"><polygon points="0,0 5,0 2.5,3" fill="#000"/></svg>
<svg class="abs" style="left:764px;top:59px" width="5" height="3" viewBox="0 0 5 3"><polygon points="0,0 5,0 2.5,3" fill="#000"/></svg>
<div class="abs" style="left:856px;top:50px;width:36px;height:15px;background:#fff;border:1px solid;border-color:#848078 #fff #fff #848078;font-size:8.5px;line-height:13px;text-align:right;padding-right:13px">0.5</div>
<div class="abs" style="left:907px;top:50px;width:36px;height:15px;background:#d4d0c8;border:1px solid;border-color:#848078 #fff #fff #848078;font-size:8.5px;line-height:13px;text-align:right;padding-right:15px;color:#555">1</div>
<div class="abs" style="left:880px;top:51px;width:11px;height:6.5px;background:#d4d0c8;border:1px solid;border-color:#fff #404040 #404040 #fff"></div>
<div class="abs" style="left:880px;top:57.5px;width:11px;height:6.5px;background:#d4d0c8;border:1px solid;border-color:#fff #404040 #404040 #fff"></div>
<svg class="abs" style="left:883px;top:53px" width="5" height="9" viewBox="0 0 5 9"><polygon points="0,2.5 5,2.5 2.5,0" fill="#000"/><polygon points="0,6.5 5,6.5 2.5,9" fill="#000"/></svg>
<div class="abs" style="left:931px;top:51px;width:11px;height:6.5px;background:#d4d0c8;border:1px solid;border-color:#fff #404040 #404040 #fff"></div>
<div class="abs" style="left:931px;top:57.5px;width:11px;height:6.5px;background:#d4d0c8;border:1px solid;border-color:#fff #404040 #404040 #fff"></div>
<svg class="abs" style="left:934px;top:53px" width="5" height="9" viewBox="0 0 5 9"><polygon points="0,2.5 5,2.5 2.5,0" fill="#000"/><polygon points="0,6.5 5,6.5 2.5,9" fill="#000"/></svg>
<div class="abs" id="leftp"></div>
<div class="abs" style="left:178px;top:80px;width:1px;height:624px;background:#404040"></div>
<div class="abs" id="lhdr">Menübaum</div>
<svg class="abs" style="left:158px;top:68px" width="20" height="9" viewBox="0 0 20 9"><path d="M3,1 H7 M4,1 V5 H6.5 V1 M2.5,5 H7.5 M5,5 V8.5" stroke="#fff" stroke-width="1" fill="none"/><path d="M12.5,1.5 L17.5,7 M17.5,1.5 L12.5,7" stroke="#fff" stroke-width="1.3"/></svg>
<div class="abs" id="tree">
<svg class="abs" style="left:0;top:0" width="172" height="240" viewBox="3 83 172 240">
<line x1="7.5" y1="89.5" x2="7.5" y2="314.5" stroke="#b8b8b8" stroke-width="1" stroke-dasharray="1,1"/>
<line x1="19.5" y1="151" x2="19.5" y2="224.5" stroke="#b8b8b8" stroke-width="1" stroke-dasharray="1,1"/>
<line x1="8" y1="89.5" x2="15" y2="89.5" stroke="#b8b8b8" stroke-width="1" stroke-dasharray="1,1"/>
<line x1="8" y1="100.75" x2="15" y2="100.75" stroke="#b8b8b8" stroke-width="1" stroke-dasharray="1,1"/>
<line x1="8" y1="112" x2="15" y2="112" stroke="#b8b8b8" stroke-width="1" stroke-dasharray="1,1"/>
<line x1="8" y1="123.25" x2="15" y2="123.25" stroke="#b8b8b8" stroke-width="1" stroke-dasharray="1,1"/>
<line x1="8" y1="134.5" x2="15" y2="134.5" stroke="#b8b8b8" stroke-width="1" stroke-dasharray="1,1"/>
<line x1="8" y1="145.75" x2="15" y2="145.75" stroke="#b8b8b8" stroke-width="1" stroke-dasharray="1,1"/>
<rect x="5" y="143.25" width="5" height="5" fill="#fff" stroke="#808080" stroke-width="0.6"/>
<line x1="6.2" y1="145.75" x2="8.8" y2="145.75" stroke="#000" stroke-width="0.8"/>
<line x1="20" y1="157" x2="26" y2="157" stroke="#b8b8b8" stroke-width="1" stroke-dasharray="1,1"/>
<line x1="20" y1="168.25" x2="26" y2="168.25" stroke="#b8b8b8" stroke-width="1" stroke-dasharray="1,1"/>
<line x1="20" y1="179.5" x2="26" y2="179.5" stroke="#b8b8b8" stroke-width="1" stroke-dasharray="1,1"/>
<line x1="20" y1="190.75" x2="26" y2="190.75" stroke="#b8b8b8" stroke-width="1" stroke-dasharray="1,1"/>
<line x1="20" y1="202" x2="26" y2="202" stroke="#b8b8b8" stroke-width="1" stroke-dasharray="1,1"/>
<line x1="20" y1="213.25" x2="26" y2="213.25" stroke="#b8b8b8" stroke-width="1" stroke-dasharray="1,1"/>
<line x1="20" y1="224.5" x2="26" y2="224.5" stroke="#b8b8b8" stroke-width="1" stroke-dasharray="1,1"/>
<line x1="8" y1="235.75" x2="15" y2="235.75" stroke="#b8b8b8" stroke-width="1" stroke-dasharray="1,1"/>
<rect x="5" y="233.25" width="5" height="5" fill="#fff" stroke="#808080" stroke-width="0.6"/>
<line x1="6.2" y1="235.75" x2="8.8" y2="235.75" stroke="#000" stroke-width="0.8"/>
<line x1="7.5" y1="234.45" x2="7.5" y2="237.05" stroke="#000" stroke-width="0.8"/>
<line x1="8" y1="247" x2="15" y2="247" stroke="#b8b8b8" stroke-width="1" stroke-dasharray="1,1"/>
<rect x="5" y="244.5" width="5" height="5" fill="#fff" stroke="#808080" stroke-width="0.6"/>
<line x1="6.2" y1="247" x2="8.8" y2="247" stroke="#000" stroke-width="0.8"/>
<line x1="7.5" y1="245.7" x2="7.5" y2="248.3" stroke="#000" stroke-width="0.8"/>
<line x1="8" y1="258.25" x2="15" y2="258.25" stroke="#b8b8b8" stroke-width="1" stroke-dasharray="1,1"/>
<line x1="8" y1="269.5" x2="15" y2="269.5" stroke="#b8b8b8" stroke-width="1" stroke-dasharray="1,1"/>
<line x1="8" y1="280.75" x2="15" y2="280.75" stroke="#b8b8b8" stroke-width="1" stroke-dasharray="1,1"/>
<line x1="8" y1="292" x2="15" y2="292" stroke="#b8b8b8" stroke-width="1" stroke-dasharray="1,1"/>
<rect x="5" y="289.5" width="5" height="5" fill="#fff" stroke="#808080" stroke-width="0.6"/>
<line x1="6.2" y1="292" x2="8.8" y2="292" stroke="#000" stroke-width="0.8"/>
<line x1="7.5" y1="290.7" x2="7.5" y2="293.3" stroke="#000" stroke-width="0.8"/>
<line x1="8" y1="303.25" x2="15" y2="303.25" stroke="#b8b8b8" stroke-width="1" stroke-dasharray="1,1"/>
<rect x="5" y="300.75" width="5" height="5" fill="#fff" stroke="#808080" stroke-width="0.6"/>
<line x1="6.2" y1="303.25" x2="8.8" y2="303.25" stroke="#000" stroke-width="0.8"/>
<line x1="7.5" y1="301.95" x2="7.5" y2="304.55" stroke="#000" stroke-width="0.8"/>
<line x1="8" y1="314.5" x2="15" y2="314.5" stroke="#b8b8b8" stroke-width="1" stroke-dasharray="1,1"/>
<rect x="5" y="312" width="5" height="5" fill="#fff" stroke="#808080" stroke-width="0.6"/>
<line x1="6.2" y1="314.5" x2="8.8" y2="314.5" stroke="#000" stroke-width="0.8"/>
<line x1="7.5" y1="313.2" x2="7.5" y2="315.8" stroke="#000" stroke-width="0.8"/>
</svg>
<svg class="abs" style="left:12px;top:1.5px;" width="9.5" height="9.5" viewBox="0 0 9.5 9.5"><rect x="0.5" y="0.5" width="8" height="8" fill="#fff" stroke="#223" stroke-width="0.6"/><line x1="1.5" y1="7.5" x2="7.5" y2="1.5" stroke="#223" stroke-width="1"/></svg>
<div class="ti" style="left:23.5px;top:0.3px">Projekt</div>
<svg class="abs" style="left:12px;top:12.75px;" width="9.5" height="9.5" viewBox="0 0 9.5 9.5"><line x1="2.5" y1="0" x2="2.5" y2="9" stroke="#3344cc" stroke-width="0.9"/><line x1="6" y1="0" x2="6" y2="9" stroke="#3344cc" stroke-width="0.9"/><line x1="0" y1="3" x2="9" y2="3" stroke="#3344cc" stroke-width="0.9"/><line x1="0" y1="6" x2="9" y2="6" stroke="#3344cc" stroke-width="0.9"/></svg>
<div class="ti" style="left:23.5px;top:11.55px">Linienraster und Geschosse</div>
<svg class="abs" style="left:12px;top:24px;" width="9.5" height="9.5" viewBox="0 0 9.5 9.5"><rect x="0.5" y="2.5" width="8.5" height="6" fill="#1a33c0" stroke="#0a1a60" stroke-width="0.6"/><rect x="2.5" y="0.8" width="4.5" height="2" fill="#10206a"/></svg>
<div class="ti" style="left:23.5px;top:22.8px">BIM-Werkzeugkasten</div>
<svg class="abs" style="left:12px;top:35.25px;" width="9.5" height="9.5" viewBox="0 0 9.5 9.5"><line x1="1" y1="2.5" x2="8.5" y2="2.5" stroke="#222" stroke-width="1"/><line x1="1.5" y1="2.5" x2="1.5" y2="8.5" stroke="#222" stroke-width="1"/><line x1="8" y1="2.5" x2="8" y2="8.5" stroke="#222" stroke-width="1"/><line x1="4.8" y1="0.5" x2="4.8" y2="4.5" stroke="#222" stroke-width="0.9"/></svg>
<div class="ti" style="left:23.5px;top:34.05px">Struktur</div>
<svg class="abs" style="left:12px;top:46.5px;" width="9.5" height="9.5" viewBox="0 0 9.5 9.5"><line x1="0.5" y1="8" x2="9" y2="8" stroke="#223" stroke-width="1.1"/><line x1="2" y1="1" x2="2" y2="7" stroke="#223" stroke-width="1.1"/><polygon points="3,7.5 5,4.5 6.5,7.5" fill="#8a8a8a"/><rect x="6.5" y="5" width="2" height="2.5" fill="#8a8a8a"/></svg>
<div class="ti" style="left:23.5px;top:45.3px">Belastung</div>
<svg class="abs" style="left:12px;top:57.75px;" width="9.5" height="9.5" viewBox="0 0 9.5 9.5"><line x1="0.5" y1="8.3" x2="9" y2="8.3" stroke="#223" stroke-width="1.1"/><line x1="2" y1="1" x2="2" y2="7.5" stroke="#223" stroke-width="1.1"/><circle cx="6.3" cy="2.8" r="1.7" fill="#fff" stroke="#223" stroke-width="0.8"/><rect x="4.8" y="5" width="3" height="3" fill="#223"/></svg>
<div class="ti" style="left:23.5px;top:56.55px">Lastfälle und LF-Kombinationen</div>
<svg class="abs" style="left:22.5px;top:69px;" width="9.5" height="9.5" viewBox="0 0 9.5 9.5"><line x1="2" y1="0.5" x2="2" y2="8.5" stroke="#2a3a9a" stroke-width="1.2"/><rect x="3.5" y="1" width="4.5" height="3.5" fill="#d8d8f0" stroke="#2a3a9a" stroke-width="0.6"/><polygon points="0.5,6.5 3.5,6.5 2,9" fill="#2a3a9a"/></svg>
<div class="ti" style="left:35px;top:67.8px">Lastfälle</div>
<svg class="abs" style="left:22.5px;top:80.25px;" width="9.5" height="9.5" viewBox="0 0 9.5 9.5"><line x1="2" y1="0.5" x2="2" y2="8.5" stroke="#2a3a9a" stroke-width="1.2"/><polygon points="0.5,6.5 3.5,6.5 2,9" fill="#2a3a9a"/><line x1="6" y1="1" x2="6" y2="5" stroke="#2a3a9a" stroke-width="1"/><line x1="4" y1="3" x2="8" y2="3" stroke="#2a3a9a" stroke-width="1"/><polygon points="4.5,5 7.5,5 6,7.5" fill="#2a3a9a"/></svg>
<div class="ti" style="left:35px;top:79.05px">Lastgruppen</div>
<svg class="abs" style="left:22.5px;top:91.5px;" width="9.5" height="9.5" viewBox="0 0 9.5 9.5"><line x1="2" y1="0.5" x2="2" y2="8.5" stroke="#2a3a9a" stroke-width="1.2"/><polygon points="0.5,6.5 3.5,6.5 2,9" fill="#2a3a9a"/><line x1="6" y1="1" x2="6" y2="5" stroke="#2a3a9a" stroke-width="1"/><line x1="4" y1="3" x2="8" y2="3" stroke="#2a3a9a" stroke-width="1"/><polygon points="4.5,5 7.5,5 6,7.5" fill="#2a3a9a"/><polygon points="5,6.5 7,5 9,6.5 7,8.5" fill="#e8d020" stroke="#554" stroke-width="0.6"/></svg>
<div class="ti" style="left:35px;top:90.3px">LF-Kombinationen</div>
<svg class="abs" style="left:22.5px;top:102.75px;" width="9.5" height="9.5" viewBox="0 0 9.5 9.5"><line x1="2" y1="0.5" x2="2" y2="8.5" stroke="#2a3a9a" stroke-width="1.2"/><polygon points="0.5,6.5 3.5,6.5 2,9" fill="#2a3a9a"/><line x1="6" y1="1" x2="6" y2="5" stroke="#2a3a9a" stroke-width="1"/><line x1="4" y1="3" x2="8" y2="3" stroke="#2a3a9a" stroke-width="1"/><polygon points="4.5,5 7.5,5 6,7.5" fill="#2a3a9a"/><polygon points="5,6.5 7,5 9,6.5 7,8.5" fill="#e8d020" stroke="#554" stroke-width="0.6"/></svg>
<div class="ti" style="left:35px;top:101.55px">Nichtlineare LF-Kombinationen</div>
<svg class="abs" style="left:22.5px;top:114px;" width="9.5" height="9.5" viewBox="0 0 9.5 9.5"><line x1="2" y1="0.5" x2="2" y2="8.5" stroke="#2a3a9a" stroke-width="1.2"/><polygon points="0.5,6.5 3.5,6.5 2,9" fill="#2a3a9a"/><line x1="6" y1="1" x2="6" y2="5" stroke="#2a3a9a" stroke-width="1"/><line x1="4" y1="3" x2="8" y2="3" stroke="#2a3a9a" stroke-width="1"/><polygon points="4.5,5 7.5,5 6,7.5" fill="#2a3a9a"/><polygon points="5,6.5 7,5 9,6.5 7,8.5" fill="#e8d020" stroke="#554" stroke-width="0.6"/></svg>
<div class="ti" style="left:35px;top:112.8px">Stabilitäts-LFK</div>
<svg class="abs" style="left:22.5px;top:125.25px;" width="9.5" height="9.5" viewBox="0 0 9.5 9.5"><line x1="2" y1="0.5" x2="2" y2="8.5" stroke="#2a3a9a" stroke-width="1.2"/><polygon points="0.5,6.5 3.5,6.5 2,9" fill="#2a3a9a"/><line x1="6" y1="1" x2="6" y2="5" stroke="#2a3a9a" stroke-width="1"/><line x1="4" y1="3" x2="8" y2="3" stroke="#2a3a9a" stroke-width="1"/><polygon points="4.5,5 7.5,5 6,7.5" fill="#2a3a9a"/><polygon points="5,6.5 7,5 9,6.5 7,8.5" fill="#e8d020" stroke="#554" stroke-width="0.6"/></svg>
<div class="ti" style="left:35px;top:124.05px">Stahlbeton-LFK</div>
<svg class="abs" style="left:22.5px;top:136.5px;" width="9.5" height="9.5" viewBox="0 0 9.5 9.5"><line x1="1.5" y1="0.5" x2="1.5" y2="8.5" stroke="#2a3a9a" stroke-width="1.2"/><line x1="1.5" y1="8.5" x2="8.5" y2="8.5" stroke="#2a3a9a" stroke-width="1"/><rect x="3.5" y="1" width="5" height="5" fill="#d8d8f0" stroke="#2a3a9a" stroke-width="0.6"/><rect x="5" y="2.5" width="2" height="2" fill="#2a3a9a"/></svg>
<div class="ti" style="left:35px;top:135.3px">Ergebnisklassen</div>
<svg class="abs" style="left:12px;top:147.75px;" width="9.5" height="9.5" viewBox="0 0 9.5 9.5"><line x1="2" y1="1" x2="2" y2="9" stroke="#b030b0" stroke-width="1.3"/><polygon points="2,0.5 9,0.5 9,3 4,3 4,4.5" fill="#e8d020" stroke="#665" stroke-width="0.6"/><circle cx="2.5" cy="8" r="1.2" fill="#d02020"/></svg>
<div class="ti" style="left:23.5px;top:146.55px">Absenzen</div>
<svg class="abs" style="left:12px;top:159px;" width="9.5" height="9.5" viewBox="0 0 9.5 9.5"><rect x="1.5" y="0.5" width="6.5" height="8.5" fill="#f4f4f4" stroke="#222" stroke-width="0.6"/><rect x="2.5" y="1.5" width="4.5" height="2" fill="#1a33c0"/></svg>
<div class="ti" style="left:23.5px;top:157.8px">Berechnung, FE-Netz</div>
<svg class="abs" style="left:12px;top:170.25px;" width="9.5" height="9.5" viewBox="0 0 9.5 9.5"><line x1="2" y1="0.5" x2="2" y2="9" stroke="#8a8a00" stroke-width="1.6"/><polygon points="2.5,1.5 8.5,3.5 2.5,5.5" fill="#e8d820" stroke="#665" stroke-width="0.6"/></svg>
<div class="ti" style="left:23.5px;top:169.05px">Stahl</div>
<svg class="abs" style="left:12px;top:181.5px;" width="9.5" height="9.5" viewBox="0 0 9.5 9.5"><polygon points="0.5,0.5 9,0.5 9,3 6.5,3.5 6.5,9 3,9 3,3.5 0.5,3" fill="#22d8e0" stroke="#0a5a60" stroke-width="0.6"/></svg>
<div class="ti" style="left:23.5px;top:180.3px">Beton</div>
<svg class="abs" style="left:12px;top:192.75px;" width="9.5" height="9.5" viewBox="0 0 9.5 9.5"><polygon points="0.5,1 4.5,2 4.5,9 0.5,8" fill="#fff" stroke="#222" stroke-width="0.6"/><polygon points="4.5,2 9,1 9,8 4.5,9" fill="#f0e8b0" stroke="#222" stroke-width="0.6"/></svg>
<div class="ti" style="left:23.5px;top:191.55px">Dokument</div>
<svg class="abs" style="left:12px;top:204px;" width="9.5" height="9.5" viewBox="0 0 9.5 9.5"><polygon points="0.5,9 8.5,9 8.5,2.5" fill="#4a9a9a" stroke="#223" stroke-width="0.6"/><line x1="1" y1="6" x2="7" y2="0.5" stroke="#223" stroke-width="1.1"/></svg>
<div class="ti" style="left:23.5px;top:202.8px">Zeichnungswerkzeuge</div>
<svg class="abs" style="left:12px;top:215.25px;" width="9.5" height="9.5" viewBox="0 0 9.5 9.5"><rect x="1.5" y="0.5" width="6.5" height="8.5" fill="#555" stroke="#111" stroke-width="0.6"/><line x1="2.5" y1="3" x2="7" y2="3" stroke="#ddd" stroke-width="0.8"/><line x1="2.5" y1="5.5" x2="7" y2="5.5" stroke="#ddd" stroke-width="0.8"/></svg>
<div class="ti" style="left:23.5px;top:214.05px">Bibliotheken</div>
<svg class="abs" style="left:12px;top:226.5px;" width="9.5" height="9.5" viewBox="0 0 9.5 9.5"><line x1="1" y1="1" x2="8.5" y2="8.5" stroke="#222" stroke-width="1.5"/><line x1="8.5" y1="1" x2="1" y2="8.5" stroke="#222" stroke-width="1.5"/><rect x="0.3" y="0.3" width="2.8" height="2" fill="#333"/></svg>
<div class="ti" style="left:23.5px;top:225.3px">Werkzeuge</div>
</div>
<div class="abs" id="view">
<svg class="abs" style="left:-1px;top:0" width="763" height="569" viewBox="182 66 763 569"><defs><linearGradient id="sg" x1="713" y1="0" x2="858" y2="0" gradientUnits="userSpaceOnUse"><stop offset="0" stop-color="#d2d2d2"/><stop offset="0.2" stop-color="#dadada"/><stop offset="0.45" stop-color="#cfcfcf"/><stop offset="0.7" stop-color="#d6d6d6"/><stop offset="1" stop-color="#c9c9c9"/></linearGradient><linearGradient id="pg" x1="0" y1="0" x2="1" y2="0"><stop offset="0" stop-color="#2a9aa4"/><stop offset="0.45" stop-color="#4fd0d8"/><stop offset="1" stop-color="#1e7f88"/></linearGradient></defs>
<path d="M273,380 L575,150 L575.75,148.75 C579.8,149.6 591.8,151.9 600.0,153.8 C608.2,155.6 616.7,157.7 625.0,160.0 C633.3,162.3 641.7,164.8 650.0,167.5 C658.3,170.2 666.7,172.7 675.0,176.0 C683.3,179.3 692.5,183.7 700.0,187.5 C707.5,191.3 712.5,194.6 720.0,199.0 C727.5,203.4 736.7,208.5 745.0,214.0 C753.3,219.5 761.7,225.6 770.0,232.0 C778.3,238.4 787.9,246.2 795.0,252.5 C802.1,258.8 806.2,262.9 812.5,270.0 C818.8,277.1 826.7,285.8 832.5,295.0 C838.3,304.2 843.8,315.0 847.5,325.0 C851.2,335.0 853.5,345.4 855.0,355.0 C856.5,364.6 856.9,373.7 856.5,382.5 C856.1,391.3 854.4,400.1 852.5,408.0 C850.6,415.9 847.5,423.3 845.0,430.0 C842.5,436.7 841.7,440.5 837.5,448.0 C833.3,455.5 827.1,466.5 820.0,475.0 C812.9,483.5 803.3,491.7 795.0,498.8 C786.7,505.8 778.3,511.9 770.0,517.5 C761.7,523.1 753.0,528.2 745.0,532.5 C737.0,536.8 727.2,541.0 722.0,543.5 C716.8,546.0 715.1,546.8 713.8,547.5 L273,380 Z" fill="#e1e1e1" stroke="#9a9a9a" stroke-width="0.5"/>
<path d="M856.5,382.5 C855.8,386.8 854.4,400.1 852.5,408.0 C850.6,415.9 847.5,423.3 845.0,430.0 C842.5,436.7 841.7,440.5 837.5,448.0 C833.3,455.5 827.1,466.5 820.0,475.0 C812.9,483.5 803.3,491.7 795.0,498.8 C786.7,505.8 778.3,511.9 770.0,517.5 C761.7,523.1 753.0,528.2 745.0,532.5 C737.0,536.8 727.2,541.0 722.0,543.5 C716.8,546.0 715.1,546.8 713.8,547.5 L713.75,607 C715.1,606.3 716.8,605.7 722.0,603.0 C727.2,600.3 737.0,595.7 745.0,591.0 C753.0,586.3 761.7,581.0 770.0,575.0 C778.3,569.0 786.7,562.5 795.0,555.0 C803.3,547.5 812.5,539.2 820.0,530.0 C827.5,520.8 834.7,510.7 840.0,500.0 C845.3,489.3 849.5,474.0 852.0,466.0 C854.5,458.0 854.2,456.3 855.0,452.0 C855.8,447.7 856.7,442.0 857.0,440.0 Z" fill="url(#sg)" stroke="#a8a8a8" stroke-width="0.5"/>
<polygon points="273,380 713.75,547.5 713.75,607 273,439.5" fill="#cdcdcd" stroke="#a0a0a0" stroke-width="0.5"/>
<polyline points="273,439.5 331,396" fill="none" stroke="#b0b0b0" stroke-width="0.5"/>
<path d="M790,300 C795.0,306.7 811.7,326.7 820.0,340.0 C828.3,353.3 834.7,366.7 840.0,380.0 C845.3,393.3 849.8,407.5 852.0,420.0 C854.2,432.5 852.8,449.2 853.0,455.0" fill="none" stroke="#b5b5b5" stroke-width="0.5"/>
<polygon points="715,501.7 783,471.5 791,474 715,512.5" fill="#d1d1d1"/>
<polygon points="417.5,329.5 452.5,288 578,335 578,398" fill="#d9d9d9"/>
<polyline points="700,280 790,314.5" fill="none" stroke="#3c3c3c" stroke-width="0.65" stroke-dasharray="2.2,1.8"/>
<polyline points="700,286.25 790,320.75" fill="none" stroke="#3c3c3c" stroke-width="0.65" stroke-dasharray="2.2,1.8"/>
<polyline points="700,300 790,334.5" fill="none" stroke="#3c3c3c" stroke-width="0.65" stroke-dasharray="2.2,1.8"/>
<polyline points="700,313.5 790,348" fill="none" stroke="#3c3c3c" stroke-width="0.65" stroke-dasharray="2.2,1.8"/>
<polyline points="773.75,301.25 720,342.5" fill="none" stroke="#3c3c3c" stroke-width="0.65" stroke-dasharray="2.2,1.8"/>
<polyline points="795,310 705,378" fill="none" stroke="#3c3c3c" stroke-width="0.65" stroke-dasharray="2.2,1.8"/>
<polyline points="810,322 727,385" fill="none" stroke="#3c3c3c" stroke-width="0.65" stroke-dasharray="2.2,1.8"/>
<polyline points="687,300 543.75,378" fill="none" stroke="#3c3c3c" stroke-width="0.65" stroke-dasharray="2.2,1.8"/>
<polyline points="640,300 545,372" fill="none" stroke="#3c3c3c" stroke-width="0.65" stroke-dasharray="2.2,1.8"/>
<polyline points="700,330 600,404" fill="none" stroke="#3c3c3c" stroke-width="0.65" stroke-dasharray="2.2,1.8"/>
<polyline points="735,330 655,392" fill="none" stroke="#3c3c3c" stroke-width="0.65" stroke-dasharray="2.2,1.8"/>
<polyline points="545,331 640,362" fill="none" stroke="#3c3c3c" stroke-width="0.65" stroke-dasharray="2.2,1.8"/>
<polyline points="590,345 650,366" fill="none" stroke="#3c3c3c" stroke-width="0.65" stroke-dasharray="2.2,1.8"/>
<polyline points="610,330 700,362" fill="none" stroke="#3c3c3c" stroke-width="0.65" stroke-dasharray="2.2,1.8"/>
<polyline points="843.75,334.5 727.5,422.5" fill="none" stroke="#2c2c2c" stroke-width="0.6"/>
<polyline points="830,330 716,415" fill="none" stroke="#2c2c2c" stroke-width="0.6"/>
<polyline points="818.75,341.25 790,363" fill="none" stroke="#2c2c2c" stroke-width="0.6"/>
<polyline points="801,313.75 843.75,334.5" fill="none" stroke="#2c2c2c" stroke-width="0.6"/>
<polyline points="801,321 820.75,330" fill="none" stroke="#2c2c2c" stroke-width="0.6"/>
<polyline points="801,328.75 820.75,337.5" fill="none" stroke="#2c2c2c" stroke-width="0.6"/>
<polyline points="801,335 820.75,342.5" fill="none" stroke="#2c2c2c" stroke-width="0.6"/>
<polyline points="720,353.75 777.5,373.75" fill="none" stroke="#2c2c2c" stroke-width="0.6"/>
<polyline points="705,363 777.5,387.5" fill="none" stroke="#2c2c2c" stroke-width="0.6"/>
<polyline points="754.5,345 754.5,365" fill="none" stroke="#2c2c2c" stroke-width="0.6"/>
<polyline points="777.5,353.75 777.5,387.5" fill="none" stroke="#2c2c2c" stroke-width="0.6"/>
<polyline points="786,343 805,350" fill="none" stroke="#2c2c2c" stroke-width="0.6"/>
<polyline points="723.75,391.25 742.5,397.5" fill="none" stroke="#2c2c2c" stroke-width="0.6"/>
<polyline points="700,318 760,338" fill="none" stroke="#2c2c2c" stroke-width="0.6"/>
<polyline points="690,344 725,356" fill="none" stroke="#2c2c2c" stroke-width="0.6"/>
<text x="762" y="369" font-size="4.2" fill="#222" font-family="Liberation Sans,sans-serif" transform="rotate(20 762 369)">871</text>
<text x="769" y="375" font-size="4.2" fill="#222" font-family="Liberation Sans,sans-serif" transform="rotate(-37 769 375)">308</text>
<text x="744" y="409" font-size="4.2" fill="#222" font-family="Liberation Sans,sans-serif" transform="rotate(-37 744 409)">4096</text>
<text x="703" y="346" font-size="4.2" fill="#222" font-family="Liberation Sans,sans-serif" transform="rotate(20 703 346)">3385</text>
<polygon points="351.25,302 575.75,111.25 575.75,171.25 564.5,180 430,293 397.5,321.25" fill="#8f3f1b"/>
<polygon points="512,165 575.75,111.25 575.75,171.25 564.5,180 512,180" fill="#bb4a1b"/>
<polygon points="564,180.5 575.75,171.25 575.75,180" fill="#efe6e2"/>
<polygon points="397.5,321.25 430,293 452.5,297 417.5,329.5" fill="#a5644b"/>
<polygon points="330.75,303.75 561.25,107 575.75,111.25 351.25,302" fill="#ff7733"/>
<polygon points="659,198.5 671,203 655.5,215" fill="#33ee33"/>
<polygon points="655,218.3 671.7,203.3 684,206.7 666.7,223.3" fill="#ff9933"/>
<polygon points="655,218.3 666.7,223.3 668,233 657,226" fill="#b5602a"/>
<polygon points="666.7,223.3 684,206.7 684,220 668,233" fill="#c96a1f"/>
<polygon points="655,228 675,236 675,262 666,250 658,236" fill="#9a9a9a"/>
<polygon points="657,233 675,240 675,245 660,240" fill="#6a6a6a"/>
<polygon points="662,246 675,251 675,257 666,252" fill="#6a6a6a"/>
<polygon points="631.7,302.5 663,290.5 683.3,370 688.3,405.8 703.3,415 695.8,423.3 658.3,409 645.8,375" fill="#b2b2b2"/>
<polygon points="631.7,302.5 636.5,300.5 650,375 660.5,410 658.3,409 645.8,375" fill="#4a4a4a"/>
<polygon points="636.5,300.5 646,297 660,372 668,400 660.5,403 650,375" fill="#a2a2a2"/>
<polyline points="646,297 660,372 668,400 697,417" fill="none" stroke="#6f6f6f" stroke-width="0.5"/>
<polyline points="655,293.5 671,371 677,400 700,413" fill="none" stroke="#8a8a8a" stroke-width="0.5"/>
<polygon points="658.3,409 695.8,423.3 695.8,433.3 658.3,418.5" fill="#6e6e6e"/>
<polygon points="664,288.3 687.5,277.5 691.7,278.3 695.3,299 667.5,302.5" fill="#e8935a"/>
<polygon points="667.5,302.5 695.3,299 695.3,341.7 675.8,342.5" fill="#b5683b"/>
<rect x="672" y="287.5" width="11" height="5" fill="#35e060"/>
<polygon points="684.2,385 713.3,381.7 718.3,404.2 703.3,405.8 690,408.3" fill="#e8935a"/>
<polygon points="690,408.3 703.3,405.8 718.3,404.2 718.3,418.3 705,416" fill="#b5683b"/>
<rect x="694" y="391.5" width="12.5" height="6" fill="#35e060"/>
<polygon points="695.8,421.7 783,456 783,472.5 695.8,438" fill="#7b4a2c"/>
<polygon points="695.8,421.7 705,415.8 790.8,449 783,456" fill="#ff9933"/>
<polygon points="783,456 790.8,449 790.8,465 783,472.5" fill="#cc6a1e"/>
<path d="M373,288 C374.9,287.8 379.1,288.5 384.4,287.0 C389.7,285.5 396.6,283.3 405.0,279.0 C413.4,274.7 425.0,268.3 435.0,261.0 C445.0,253.7 456.2,243.7 465.0,235.0 C473.8,226.3 481.2,217.5 487.5,208.8 C493.8,200.0 499.0,191.3 502.5,182.5 C506.0,173.7 507.7,160.4 508.8,156.0 C509.8,157.7 511.5,163.2 515.0,166.0 C518.5,168.8 525.0,171.2 530.0,173.0 C535.0,174.8 539.0,175.7 545.0,177.0 C551.0,178.3 558.5,179.7 566.0,180.6 C573.5,181.5 581.0,182.1 590.0,182.5 C599.0,182.9 609.5,183.3 620.0,183.2 C630.5,183.1 644.9,182.2 653.0,181.7 C661.1,181.2 665.9,180.3 668.5,180.0 C666.8,182.5 660.5,190.0 658.3,195.0 C656.0,200.0 655.4,204.4 655.0,210.0 C654.6,215.6 654.7,222.2 655.8,228.3 C656.9,234.4 658.5,240.3 661.7,246.7 C664.9,253.1 671.0,261.9 675.0,266.7 C679.0,271.5 682.2,274.0 686.0,275.5 C689.8,277.0 696.0,275.5 698.0,275.5 C696.2,276.0 693.3,276.4 687.5,278.5 C681.7,280.6 672.3,284.0 663.0,288.0 C653.7,292.0 641.4,297.6 631.7,302.5 C622.0,307.4 612.4,312.2 605.0,317.5 C597.6,322.8 591.9,327.9 587.5,334.0 C583.1,340.1 580.0,350.7 578.5,354.0 C576.5,352.2 572.2,347.3 566.7,343.0 C561.2,338.7 552.8,332.6 545.8,328.3 C538.8,324.0 532.0,320.5 525.0,317.0 C518.0,313.5 510.9,310.1 504.0,307.5 C497.1,304.9 490.2,303.1 483.3,301.2 C476.4,299.4 469.4,298.0 462.5,296.7 C455.6,295.4 448.6,294.2 441.7,293.3 C434.8,292.4 427.8,292.0 420.8,291.5 C413.9,291.0 406.0,290.8 400.0,290.4 C394.0,290.0 389.5,289.7 385.0,289.3 C380.5,288.9 375.0,288.2 373.0,288.0 Z" fill="#ffffff" stroke="#333" stroke-width="0.5"/>
<rect x="369.25" y="285" width="5.25" height="26" fill="url(#pg)"/><ellipse cx="371.875" cy="285" rx="2.625" ry="1.3" fill="#d8eef0" stroke="#2b8a92" stroke-width="0.5"/>
<rect x="506" y="155" width="5.5" height="26" fill="url(#pg)"/><ellipse cx="508.75" cy="155" rx="2.75" ry="1.3" fill="#d8eef0" stroke="#2b8a92" stroke-width="0.5"/>
<polyline points="668.5,180 676,171" fill="none" stroke="#333" stroke-width="0.6"/>
<rect x="675.3" y="169.2" width="5" height="119.8" fill="url(#pg)"/><ellipse cx="677.8" cy="169.2" rx="2.5" ry="1.3" fill="#d8eef0" stroke="#2b8a92" stroke-width="0.5"/>
<rect x="697.5" y="273.5" width="5.5" height="120.5" fill="url(#pg)"/><ellipse cx="700.25" cy="273.5" rx="2.75" ry="1.3" fill="#d8eef0" stroke="#2b8a92" stroke-width="0.5"/>
<rect x="576.25" y="354" width="5.5" height="45" fill="url(#pg)"/><ellipse cx="579" cy="354" rx="2.75" ry="1.3" fill="#d8eef0" stroke="#2b8a92" stroke-width="0.5"/>
<polygon points="571.25,440 582.5,440 606.7,449 586.7,460.8 571.25,455" fill="#f0a06a"/>
<polygon points="586.7,460.8 606.7,449 606.7,490 586.7,501.7" fill="#c68861"/>
<polygon points="550.8,470 571.25,455 586.7,460.8 586.7,501.7 550.8,487.5" fill="#a5623d"/>
<polygon points="550.8,482 586.7,496.5 586.7,501.7 550.8,487.5" fill="#7a4028"/>
<rect x="581" y="444.5" width="5" height="4" fill="#35e060"/>
<polygon points="352,394 381,406 381,410 352,398" fill="#c47a45"/>
<polygon points="330.75,303.75 571.25,405 571.25,485 330.75,386" fill="#6b3a29"/>
<polygon points="330.75,303.75 571.25,405 571.25,476 330.75,378.75" fill="#4f200e"/>
<polygon points="571.25,405 581.75,397.5 581.75,468.5 571.25,476" fill="#c8501e"/>
<polygon points="330.75,303.75 351.25,302 581.75,397.5 571.25,405" fill="#ff7733"/>
<polyline points="571.7,464 581.7,458.3 606.7,477.5" fill="none" stroke="#e8e0da" stroke-width="0.5"/>
<polyline points="571.7,476 581.7,470 606.7,489" fill="none" stroke="#e8e0da" stroke-width="0.5"/>
<polygon points="609.5,419.7 695,455.5 695,537.5 609.5,502" fill="#1c6c1c"/>
<polygon points="695,455.5 715,442.5 715,523.5 695,537.5" fill="#2f9a2f"/>
<polygon points="609.5,419.7 695,455.5 695,528 609.5,492.5" fill="#0d560d"/>
<polygon points="695,455.5 715,442.5 715,514.5 695,528" fill="#1f9c1f"/>
<polygon points="609.5,419.7 629.2,407.5 715,442.5 695,455.5" fill="#37ff37"/>
<polyline points="324.5,305 535,136.4" fill="none" stroke="#3c3c3c" stroke-width="0.65" stroke-dasharray="2.2,1.8"/>
<polyline points="324.5,296 536,126.6" fill="none" stroke="#3c3c3c" stroke-width="0.65" stroke-dasharray="2.2,1.8"/>
<polyline points="324.5,286 548,107" fill="none" stroke="#3c3c3c" stroke-width="0.65" stroke-dasharray="2.2,1.8"/>
<polyline points="324.5,275.5 552,93.3" fill="none" stroke="#3c3c3c" stroke-width="0.65" stroke-dasharray="2.2,1.8"/>
<polyline points="336.7,255 336.7,300" fill="none" stroke="#3c3c3c" stroke-width="0.65" stroke-dasharray="2.2,1.8"/>
<polyline points="350.5,250 350.5,293" fill="none" stroke="#3c3c3c" stroke-width="0.65" stroke-dasharray="2.2,1.8"/>
<polyline points="435,177 435,232" fill="none" stroke="#3c3c3c" stroke-width="0.65" stroke-dasharray="2.2,1.8"/>
<polyline points="497.5,128 497.5,198" fill="none" stroke="#3c3c3c" stroke-width="0.65" stroke-dasharray="2.2,1.8"/>
<polyline points="523,110 523,173" fill="none" stroke="#3c3c3c" stroke-width="0.65" stroke-dasharray="2.2,1.8"/>
<polyline points="533.5,113 533.5,171" fill="none" stroke="#3c3c3c" stroke-width="0.65" stroke-dasharray="2.2,1.8"/>
<polyline points="666.25,157.5 666.25,250" fill="none" stroke="#3c3c3c" stroke-width="0.65" stroke-dasharray="2.2,1.8"/>
<polyline points="560,137.2 791,213.45" fill="none" stroke="#3c3c3c" stroke-width="0.65" stroke-dasharray="2.2,1.8"/>
<polyline points="560,149.7 791,225.95" fill="none" stroke="#3c3c3c" stroke-width="0.65" stroke-dasharray="2.2,1.8"/>
<polyline points="560,152.2 791,228.45" fill="none" stroke="#3c3c3c" stroke-width="0.65" stroke-dasharray="2.2,1.8"/>
<polyline points="560,167.2 791,243.45" fill="none" stroke="#3c3c3c" stroke-width="0.65" stroke-dasharray="2.2,1.8"/>
<polyline points="520,118 575,136" fill="none" stroke="#3c3c3c" stroke-width="0.65" stroke-dasharray="2.2,1.8"/>
<polyline points="500,131 560,150" fill="none" stroke="#3c3c3c" stroke-width="0.65" stroke-dasharray="2.2,1.8"/>
<polyline points="754.5,188.75 754.5,330" fill="none" stroke="#3c3c3c" stroke-width="0.65" stroke-dasharray="2.2,1.8"/>
<polyline points="777.5,196 777.5,340" fill="none" stroke="#3c3c3c" stroke-width="0.65" stroke-dasharray="2.2,1.8"/>
<polyline points="754.5,302 777.5,310" fill="none" stroke="#3c3c3c" stroke-width="0.65" stroke-dasharray="2.2,1.8"/>
<polyline points="754.5,328 777.5,337" fill="none" stroke="#3c3c3c" stroke-width="0.65" stroke-dasharray="2.2,1.8"/>
<polyline points="820.75,223.75 820.75,341" fill="none" stroke="#2c2c2c" stroke-width="0.6"/>
<polyline points="834.25,227.5 834.25,345" fill="none" stroke="#2c2c2c" stroke-width="0.6"/>
<polyline points="801,217.5 834.25,227.5" fill="none" stroke="#2c2c2c" stroke-width="0.6"/>
<polyline points="801,230 820.75,237.5" fill="none" stroke="#2c2c2c" stroke-width="0.6"/>
<polyline points="801,232.5 820.75,239.5" fill="none" stroke="#2c2c2c" stroke-width="0.6"/>
<polyline points="801,247.5 820.75,253.75" fill="none" stroke="#2c2c2c" stroke-width="0.6"/>
<text x="819.5" y="250" font-size="3.6" fill="#222" font-family="Liberation Sans,sans-serif" transform="rotate(-90 819.5 250)">480 450 430</text>
<text x="819.5" y="292" font-size="3.8" fill="#222" font-family="Liberation Sans,sans-serif" transform="rotate(-90 819.5 292)">2300</text>
<text x="833" y="292" font-size="3.8" fill="#222" font-family="Liberation Sans,sans-serif" transform="rotate(-90 833 292)">4000</text>
<text x="819.5" y="342" font-size="3.6" fill="#222" font-family="Liberation Sans,sans-serif" transform="rotate(-90 819.5 342)">480 450 430</text>
<polyline points="551,100 551,178" fill="none" stroke="#2c2c2c" stroke-width="0.6"/>
<polyline points="560.5,94 560.5,180" fill="none" stroke="#2c2c2c" stroke-width="0.6"/>
<polyline points="539,110 560.5,94" fill="none" stroke="#2c2c2c" stroke-width="0.6"/>
<polyline points="539,124 551,115" fill="none" stroke="#2c2c2c" stroke-width="0.6"/>
<text x="550" y="118" font-size="3.4" fill="#222" font-family="Liberation Sans,sans-serif" transform="rotate(-90 550 118)">480 450</text>
<text x="559.5" y="163" font-size="3.6" fill="#222" font-family="Liberation Sans,sans-serif" transform="rotate(-90 559.5 163)">4000</text>
<text x="550" y="170" font-size="3.6" fill="#222" font-family="Liberation Sans,sans-serif" transform="rotate(-90 550 170)">2300</text>
<polyline points="310,400 586,498" fill="none" stroke="#2c2c2c" stroke-width="0.6"/>
<polyline points="318,392.5 467.5,442.5" fill="none" stroke="#2c2c2c" stroke-width="0.6"/>
<polyline points="310,400 327.5,386" fill="none" stroke="#2c2c2c" stroke-width="0.6"/>
<polyline points="327.5,386 350,393.75" fill="none" stroke="#2c2c2c" stroke-width="0.6"/>
<polyline points="336.75,408.75 336.75,443.75" fill="none" stroke="#2c2c2c" stroke-width="0.6"/>
<polyline points="350,393.75 350,417.5" fill="none" stroke="#2c2c2c" stroke-width="0.6"/>
<polyline points="336.75,443.75 382.5,408.75" fill="none" stroke="#2c2c2c" stroke-width="0.6"/>
<polyline points="336.75,428.75 350,417.5" fill="none" stroke="#2c2c2c" stroke-width="0.6"/>
<polyline points="462,446 470,440" fill="none" stroke="#2c2c2c" stroke-width="0.6"/>
<text x="320" y="392" font-size="4.2" fill="#222" font-family="Liberation Sans,sans-serif" transform="rotate(20 320 392)">200</text>
<text x="341" y="423" font-size="4.2" fill="#222" font-family="Liberation Sans,sans-serif" transform="rotate(-52 341 423)">367</text>
<text x="392" y="419" font-size="4.2" fill="#222" font-family="Liberation Sans,sans-serif" transform="rotate(20 392 419)">3125</text>
<text x="433" y="441" font-size="4.2" fill="#222" font-family="Liberation Sans,sans-serif" transform="rotate(20 433 441)">8088</text>
<text x="503" y="459" font-size="4.2" fill="#222" font-family="Liberation Sans,sans-serif" transform="rotate(20 503 459)">4300</text>
<polyline points="451,342 493.75,310.6" fill="none" stroke="#2c2c2c" stroke-width="0.6"/>
<polyline points="463.5,348 508.3,313.75" fill="none" stroke="#2c2c2c" stroke-width="0.6"/>
<text x="464" y="329" font-size="4.2" fill="#222" font-family="Liberation Sans,sans-serif" transform="rotate(-37 464 329)">2438</text>
<polyline points="418.75,329.4 453,299" fill="none" stroke="#3c3c3c" stroke-width="0.65" stroke-dasharray="2.2,1.8"/>
<polyline points="453,299 543.75,330.4" fill="none" stroke="#3c3c3c" stroke-width="0.65" stroke-dasharray="2.2,1.8"/></svg>
</div>
<div class="abs" style="left:945.5px;top:66px;width:12.5px;height:474px;background:#e9e7e1"></div>
<div class="abs" style="left:946px;top:66px;width:12px;height:11px;background:#d4d0c8;border:1px solid;border-color:#fff #404040 #404040 #fff;box-shadow:inset -1px -1px 0 #848078"></div>
<svg class="abs" style="left:949.5px;top:70px" width="5" height="3"><polygon points="0,3 5,3 2.5,0" fill="#000"/></svg>
<div class="abs" style="left:946px;top:295px;width:12px;height:12.5px;background:#d4d0c8;border:1px solid;border-color:#fff #404040 #404040 #fff;box-shadow:inset -1px -1px 0 #848078"></div>
<div class="abs" style="left:946px;top:526px;width:12px;height:11px;background:#d4d0c8;border:1px solid;border-color:#fff #404040 #404040 #fff;box-shadow:inset -1px -1px 0 #848078"></div>
<svg class="abs" style="left:949.5px;top:530.5px" width="5" height="3"><polygon points="0,0 5,0 2.5,3" fill="#000"/></svg>
<div class="abs" style="left:946px;top:540px;width:12px;height:95px;background:linear-gradient(90deg,#3c3c3c,#6c6c6c 50%,#3c3c3c);border:1px solid #222"></div>
<div class="abs" style="left:182px;top:635.5px;width:763px;height:13px;background:#e9e7e1"></div>
<div class="abs" style="left:182px;top:635.5px;width:178px;height:13px;background:#d4d0c8"></div>
<div class="abs" style="left:182px;top:635.5px;width:12.5px;height:13px;background:#ecebe6;border:1px solid;border-color:#848078 #fff #fff #848078"></div>
<div class="abs" style="left:195.5px;top:635.5px;width:12.5px;height:13px;background:#ecebe6;border:1px solid;border-color:#848078 #fff #fff #848078"></div>
<svg class="abs" style="left:183.5px;top:636.5px;" width="11" height="11" viewBox="0 0 11 11"><polygon points="1,7 4,3 9,3 6,7" fill="#fff" stroke="#222" stroke-width="0.6"/><polygon points="1,7 6,7 6,9 1,9" fill="#fff" stroke="#222" stroke-width="0.6"/></svg>
<svg class="abs" style="left:197px;top:636.5px;" width="11" height="11" viewBox="0 0 11 11"><polygon points="1,7 4,3 9,3 6,7" fill="#e8e020" stroke="#222" stroke-width="0.6"/><polygon points="1,7 6,7 6,9.5 1,9.5" fill="#c8c010" stroke="#222" stroke-width="0.6"/><polygon points="6,7 9,3 9,5.5 6,9.5" fill="#8a8a00" stroke="#222" stroke-width="0.6"/></svg>
<svg class="abs" style="left:211px;top:636.5px;" width="11" height="11" viewBox="0 0 11 11"><polygon points="1,9 5,2 9,9" fill="#c8d0f0" stroke="#2233aa" stroke-width="0.9"/><line x1="0.5" y1="9.5" x2="9.5" y2="9.5" stroke="#2233aa" stroke-width="1"/><circle cx="5" cy="2" r="1.2" fill="#d02020"/></svg>
<svg class="abs" style="left:224.5px;top:636.5px;" width="11" height="11" viewBox="0 0 11 11"><line x1="0.5" y1="9" x2="10" y2="9" stroke="#223" stroke-width="1.2"/><line x1="2" y1="1" x2="2" y2="8" stroke="#223" stroke-width="1.1"/><polygon points="3.5,8.5 5.5,5 7.5,8.5" fill="#2233aa"/><rect x="7.5" y="5.5" width="2.5" height="3" fill="#d02020"/></svg>
<svg class="abs" style="left:238px;top:636.5px;" width="11" height="11" viewBox="0 0 11 11"><line x1="1" y1="1" x2="1" y2="10" stroke="#2233aa" stroke-width="1.1"/><line x1="1" y1="9.5" x2="9.5" y2="9.5" stroke="#2233aa" stroke-width="1.1"/><rect x="3" y="1" width="6.5" height="3" fill="#d02020"/><line x1="3" y1="6" x2="8" y2="6" stroke="#8a8a8a" stroke-width="1"/></svg>
<svg class="abs" style="left:253px;top:636.5px;" width="11" height="11" viewBox="0 0 11 11"><line x1="0.5" y1="6.5" x2="10" y2="6.5" stroke="#2233cc" stroke-width="1.3"/><rect x="1" y="1" width="8.5" height="3.2" fill="#f4f4f4"/><line x1="1.5" y1="2.6" x2="9" y2="2.6" stroke="#222" stroke-width="1.6"/></svg>
<svg class="abs" style="left:266px;top:636.5px;" width="11" height="11" viewBox="0 0 11 11"><rect x="1" y="1" width="8.5" height="3.2" fill="#f4f4f4"/><line x1="1.5" y1="2.6" x2="9" y2="2.6" stroke="#222" stroke-width="1.6"/><ellipse cx="5.5" cy="8" rx="4.5" ry="2" fill="#b8b020" stroke="#443" stroke-width="0.6"/></svg>
<svg class="abs" style="left:280px;top:636.5px;" width="11" height="11" viewBox="0 0 11 11"><polygon points="0.5,9 5.5,2 10.5,9" fill="none" stroke="#555" stroke-width="0.8"/><circle cx="5.5" cy="2" r="1.1" fill="#208020"/><circle cx="1" cy="9" r="1.1" fill="#d02020"/><circle cx="10" cy="9" r="1.1" fill="#2233cc"/><line x1="2.5" y1="6.5" x2="8.5" y2="6.5" stroke="#888" stroke-width="0.7"/></svg>
<svg class="abs" style="left:295px;top:636.5px;" width="11" height="11" viewBox="0 0 11 11"><rect x="1.5" y="1" width="7.5" height="8.5" fill="#b8b4ac" stroke="#223" stroke-width="0.6"/><line x1="4" y1="1" x2="4" y2="9.5" stroke="#223" stroke-width="0.8"/><line x1="6.5" y1="1" x2="6.5" y2="9.5" stroke="#223" stroke-width="0.8"/></svg>
<svg class="abs" style="left:310px;top:636.5px;" width="11" height="11" viewBox="0 0 11 11"><rect x="0.5" y="0.5" width="7" height="7" fill="#3a9a9a" stroke="#1428a0" stroke-width="0.6"/><rect x="4" y="4" width="6.5" height="6.5" fill="#e8e020" stroke="#1428a0" stroke-width="0.6"/><rect x="2" y="2" width="3" height="3" fill="#e8e020"/></svg>
<svg class="abs" style="left:323px;top:636.5px;" width="11" height="11" viewBox="0 0 11 11"><rect x="1" y="1" width="4" height="8.5" fill="#c8c4bc" stroke="#a8a49c" stroke-width="0.6"/><rect x="6" y="2" width="4" height="5" fill="#e8e6e0" stroke="#a8a49c" stroke-width="0.6"/></svg>
<svg class="abs" style="left:336px;top:636.5px;" width="11" height="11" viewBox="0 0 11 11"><rect x="0.5" y="0.5" width="10" height="10" fill="#fff" stroke="#d02020" stroke-width="0.6"/><line x1="3.8" y1="0.5" x2="3.8" y2="10.5" stroke="#d02020" stroke-width="1"/><line x1="7.2" y1="0.5" x2="7.2" y2="10.5" stroke="#d02020" stroke-width="1"/><line x1="0.5" y1="3.8" x2="10.5" y2="3.8" stroke="#d02020" stroke-width="1"/><line x1="0.5" y1="7.2" x2="10.5" y2="7.2" stroke="#d02020" stroke-width="1"/><rect x="0.5" y="6" width="4" height="4.5" fill="#2233cc"/></svg>
<div class="abs" style="left:208.7px;top:636.5px;width:2px;height:11px;border-left:1px solid #848078;border-right:1px solid #fff"></div>
<div class="abs" style="left:249.5px;top:636.5px;width:2px;height:11px;border-left:1px solid #848078;border-right:1px solid #fff"></div>
<div class="abs" style="left:349px;top:635.5px;width:11.5px;height:13px;background:#d4d0c8;border:1px solid;border-color:#fff #404040 #404040 #fff;box-shadow:inset -1px -1px 0 #848078"></div>
<svg class="abs" style="left:353px;top:639.5px" width="3" height="5"><polygon points="3,0 3,5 0,2.5" fill="#000"/></svg>
<div class="abs" style="left:566px;top:636px;width:11.5px;height:12.5px;background:#d4d0c8;border:1px solid;border-color:#fff #404040 #404040 #fff;box-shadow:inset -1px -1px 0 #848078"></div>
<div class="abs" style="left:784.5px;top:636px;width:11px;height:12.5px;background:#d4d0c8;border:1px solid;border-color:#fff #404040 #404040 #fff;box-shadow:inset -1px -1px 0 #848078"></div>
<svg class="abs" style="left:788.5px;top:639.5px" width="3" height="5"><polygon points="0,0 0,5 3,2.5" fill="#000"/></svg>
<div class="abs" style="left:796px;top:636px;width:73px;height:12px;background:linear-gradient(180deg,#2e2e2e,#707070 50%,#2e2e2e);border:1px solid #222"></div>
<div class="abs" style="left:870.5px;top:636px;width:74.5px;height:12px;background:linear-gradient(180deg,#2e2e2e,#707070 50%,#2e2e2e);border:1px solid #222"></div>
<div class="abs" style="left:182px;top:653.5px;width:778px;height:13.5px;background:#808080;color:#c8c8c8;font-size:8px;line-height:13.5px;padding-left:2px">Befehlszeile</div>
<svg class="abs" style="left:936px;top:656px" width="20" height="9" viewBox="0 0 20 9"><path d="M3,1 H7 M4,1 V5 H6.5 V1 M2.5,5 H7.5 M5,5 V8.5" stroke="#fff" stroke-width="1" fill="none"/><path d="M13.5,1.5 L18.5,7 M18.5,1.5 L13.5,7" stroke="#fff" stroke-width="1.3"/></svg>
<div class="abs" style="left:182.5px;top:669px;width:14px;height:15.5px;border:1px solid;border-color:#fff #848078 #848078 #fff"></div>
<svg class="abs" style="left:185px;top:671px;" width="9" height="11" viewBox="0 0 9 11"><polygon points="2,0.5 2,8.5 4,6.5 5.5,10 6.8,9.5 5.3,6 8,6" fill="#e8e6e0" stroke="#a8a49c" stroke-width="0.8"/></svg>
<div class="abs" style="left:185.5px;top:687.5px;width:772px;height:15px;background:#fff;border:1px solid;border-color:#404040 #e8e6e0 #e8e6e0 #404040;font-size:8.4px;line-height:11px;padding-left:3px;color:#111">Befehl &gt;</div>
<div class="abs" style="left:800px;top:669.5px;width:12.5px;height:15px;background:#ecebe6;border:1px solid;border-color:#848078 #fff #fff #848078"></div>
<div class="abs" style="left:840px;top:669.5px;width:12.5px;height:15px;background:#ecebe6;border:1px solid;border-color:#848078 #fff #fff #848078"></div>
<div class="abs" style="left:853px;top:669.5px;width:12.5px;height:15px;background:#ecebe6;border:1px solid;border-color:#848078 #fff #fff #848078"></div>
<div class="abs" style="left:879px;top:669.5px;width:12.5px;height:15px;background:#ecebe6;border:1px solid;border-color:#848078 #fff #fff #848078"></div>
<svg class="abs" style="left:674px;top:671.5px;" width="10.5" height="11" viewBox="0 0 10.5 11"><line x1="1" y1="2" x2="7" y2="8" stroke="#a8a49c" stroke-width="1"/><line x1="7" y1="8" x2="4" y2="7.5" stroke="#a8a49c" stroke-width="1"/></svg>
<svg class="abs" style="left:685px;top:671.5px;" width="10.5" height="11" viewBox="0 0 10.5 11"><line x1="1" y1="2" x2="8" y2="8" stroke="#a8a49c" stroke-width="1"/><polygon points="8,8 5,7.5 7,5" fill="#a8a49c"/></svg>
<svg class="abs" style="left:698.5px;top:671.5px;" width="10.5" height="11" viewBox="0 0 10.5 11"><circle cx="4.5" cy="5.5" r="3" fill="none" stroke="#a8a49c" stroke-width="1"/></svg>
<svg class="abs" style="left:711.5px;top:671.5px;" width="10.5" height="11" viewBox="0 0 10.5 11"><line x1="1" y1="2" x2="8" y2="9" stroke="#a8a49c" stroke-width="1"/><line x1="8" y1="2" x2="1" y2="9" stroke="#a8a49c" stroke-width="1"/></svg>
<svg class="abs" style="left:729px;top:671.5px;" width="10.5" height="11" viewBox="0 0 10.5 11"><line x1="1" y1="9" x2="4.5" y2="2" stroke="#a8a49c" stroke-width="1"/><line x1="4.5" y1="2" x2="8.5" y2="9" stroke="#a8a49c" stroke-width="1"/></svg>
<svg class="abs" style="left:741px;top:671.5px;" width="10.5" height="11" viewBox="0 0 10.5 11"><line x1="1" y1="8" x2="8" y2="2" stroke="#a8a49c" stroke-width="1"/><polygon points="8,2 5,2.5 7.5,5" fill="#a8a49c"/></svg>
<svg class="abs" style="left:755px;top:671.5px;" width="10.5" height="11" viewBox="0 0 10.5 11"><polygon points="1,2 9,2 6,9" fill="none" stroke="#a8a49c" stroke-width="1"/></svg>
<svg class="abs" style="left:769px;top:671.5px;" width="10.5" height="11" viewBox="0 0 10.5 11"><line x1="1" y1="8" x2="9" y2="3" stroke="#a8a49c" stroke-width="1"/><polygon points="9,3 6,3 8,6" fill="#a8a49c"/></svg>
<svg class="abs" style="left:786px;top:671.5px;" width="10.5" height="11" viewBox="0 0 10.5 11"><polygon points="1,1 7,2.5 3,6" fill="#2233cc"/><line x1="4" y1="4" x2="8" y2="9.5" stroke="#d02020" stroke-width="1.2"/><rect x="6" y="0.5" width="3.5" height="3" fill="#2233cc"/></svg>
<svg class="abs" style="left:801px;top:671.5px;" width="10.5" height="11" viewBox="0 0 10.5 11"><circle cx="2" cy="2.5" r="0.7" fill="#223"/><circle cx="2" cy="5.5" r="0.7" fill="#223"/><circle cx="2" cy="8.5" r="0.7" fill="#223"/><circle cx="5" cy="2.5" r="0.7" fill="#223"/><circle cx="5" cy="5.5" r="0.7" fill="#223"/><circle cx="5" cy="8.5" r="0.7" fill="#223"/><circle cx="8" cy="2.5" r="0.7" fill="#223"/><circle cx="8" cy="5.5" r="0.7" fill="#223"/><circle cx="8" cy="8.5" r="0.7" fill="#223"/></svg>
<svg class="abs" style="left:815px;top:671.5px;" width="10.5" height="11" viewBox="0 0 10.5 11"><line x1="1" y1="2" x2="9" y2="2" stroke="#2233cc" stroke-width="1.1"/><line x1="1" y1="8" x2="9" y2="8" stroke="#223" stroke-width="1.1"/><line x1="5" y1="2" x2="5" y2="8" stroke="#223" stroke-width="1.1"/><circle cx="5" cy="2" r="1.2" fill="#d02020"/></svg>
<svg class="abs" style="left:828px;top:671.5px;" width="10.5" height="11" viewBox="0 0 10.5 11"><line x1="1" y1="1.5" x2="9" y2="9" stroke="#208020" stroke-width="1.3"/><line x1="9" y1="1.5" x2="1" y2="9" stroke="#208020" stroke-width="1.3"/><circle cx="5" cy="5.3" r="1.3" fill="#d02020"/></svg>
<svg class="abs" style="left:841px;top:671.5px;" width="10.5" height="11" viewBox="0 0 10.5 11"><line x1="1" y1="1.5" x2="9" y2="9.5" stroke="#223" stroke-width="1.2"/><line x1="1" y1="1.5" x2="1" y2="5" stroke="#d02020" stroke-width="1.2"/><line x1="1" y1="1.5" x2="5" y2="1.5" stroke="#d02020" stroke-width="1.2"/><circle cx="1.5" cy="2" r="1.2" fill="#d02020"/></svg>
<svg class="abs" style="left:854px;top:671.5px;" width="10.5" height="11" viewBox="0 0 10.5 11"><line x1="1" y1="1.5" x2="9" y2="9.5" stroke="#223" stroke-width="1.2"/><line x1="1" y1="1.5" x2="5" y2="1.5" stroke="#d02020" stroke-width="1.2"/><circle cx="1.5" cy="2" r="1.2" fill="#d02020"/><line x1="5" y1="9.5" x2="9" y2="9.5" stroke="#223" stroke-width="1"/></svg>
<svg class="abs" style="left:867.5px;top:671.5px;" width="10.5" height="11" viewBox="0 0 10.5 11"><line x1="1" y1="1.5" x2="9" y2="9.5" stroke="#223" stroke-width="1.2"/><line x1="9" y1="1.5" x2="1" y2="9.5" stroke="#223" stroke-width="1.2"/><circle cx="5" cy="5.5" r="1.3" fill="#d02020"/><line x1="1" y1="1.5" x2="9" y2="1.5" stroke="#223" stroke-width="1"/></svg>
<svg class="abs" style="left:880px;top:671.5px;" width="10.5" height="11" viewBox="0 0 10.5 11"><polygon points="1,2 9,2 5,9" fill="none" stroke="#223" stroke-width="1"/><circle cx="5" cy="9" r="1.3" fill="#d02020"/><line x1="5" y1="3" x2="5" y2="7" stroke="#2233cc" stroke-width="1"/></svg>
<svg class="abs" style="left:893px;top:671.5px;" width="10.5" height="11" viewBox="0 0 10.5 11"><line x1="1" y1="9.5" x2="9" y2="1.5" stroke="#223" stroke-width="1.2"/><line x1="2" y1="2" x2="8" y2="2" stroke="#223" stroke-width="1"/><line x1="2" y1="2" x2="2" y2="8" stroke="#223" stroke-width="1"/><circle cx="8.5" cy="2" r="1.2" fill="#d02020"/></svg>
<svg class="abs" style="left:906px;top:671.5px;" width="10.5" height="11" viewBox="0 0 10.5 11"><rect x="1.5" y="2.5" width="6.5" height="6.5" fill="none" stroke="#223" stroke-width="0.6"/><circle cx="8" cy="2.5" r="1.3" fill="#d02020"/><line x1="1.5" y1="9" x2="8" y2="2.5" stroke="#223" stroke-width="0.9"/></svg>
<svg class="abs" style="left:918px;top:671.5px;" width="10.5" height="11" viewBox="0 0 10.5 11"><path d="M1,9 Q5,8 9,1.5" fill="none" stroke="#223" stroke-width="1.2"/><circle cx="8.5" cy="2" r="1.3" fill="#d02020"/><circle cx="1.5" cy="8.5" r="1" fill="#d02020"/></svg>
<svg class="abs" style="left:932px;top:671.5px;" width="10.5" height="11" viewBox="0 0 10.5 11"><rect x="0.5" y="4.5" width="9.5" height="5" fill="#d8c060" stroke="#443" stroke-width="0.6"/><line x1="1" y1="3" x2="9" y2="3" stroke="#d02020" stroke-width="1"/><line x1="2" y1="6" x2="8.5" y2="6" stroke="#443" stroke-width="0.7"/><line x1="2" y1="8" x2="8.5" y2="8" stroke="#443" stroke-width="0.7"/></svg>
<svg class="abs" style="left:945px;top:671.5px;" width="10.5" height="11" viewBox="0 0 10.5 11"><rect x="2.5" y="2.5" width="6.5" height="8" fill="#e8e050" stroke="#443" stroke-width="0.6"/><line x1="1" y1="1.5" x2="9" y2="1.5" stroke="#d02020" stroke-width="1"/><line x1="4.5" y1="4" x2="4.5" y2="9" stroke="#443" stroke-width="0.8"/><line x1="6.5" y1="4" x2="6.5" y2="9" stroke="#443" stroke-width="0.8"/></svg>
<div class="abs" style="left:724px;top:670.5px;width:2px;height:13px;border-left:1px solid #848078;border-right:1px solid #fff"></div>
<div class="abs" style="left:782.5px;top:670.5px;width:2px;height:13px;border-left:1px solid #848078;border-right:1px solid #fff"></div>
<div class="abs" style="left:798px;top:670.5px;width:2px;height:13px;border-left:1px solid #848078;border-right:1px solid #fff"></div>
<div class="abs" style="left:0;top:703.5px;width:960px;height:16.5px;background:#d4d0c8;border-top:1px solid #fff"></div>
<div class="abs" style="left:76px;top:706px;width:2px;height:13px;border-left:1px solid #848078;border-right:1px solid #fff"></div>
<div class="abs" style="left:153.5px;top:706px;width:2px;height:13px;border-left:1px solid #848078;border-right:1px solid #fff"></div>
<div class="abs" style="left:177.5px;top:706px;width:2px;height:13px;border-left:1px solid #848078;border-right:1px solid #fff"></div>
<div class="abs" style="left:220px;top:706px;width:2px;height:13px;border-left:1px solid #848078;border-right:1px solid #fff"></div>
<div class="abs st" style="left:161.5px;top:706px">mm</div>
<div class="abs st" style="left:185px;top:706px">Ebene XY</div>
<div class="abs st" style="left:224px;top:706px">Bereit</div>
<div class="abs" style="left:1px;top:690px;width:20px;height:14px;background:#d4d0c8;border:1px solid;border-color:#d4d0c8 #404040 #404040 #fff;border-radius:0 0 2px 2px"></div>
<svg class="abs" style="left:6px;top:692.5px;" width="9" height="9" viewBox="0 0 9 9"><rect x="0.5" y="0.5" width="3" height="3" fill="#fff" stroke="#223" stroke-width="0.6"/><rect x="4.5" y="2" width="3.5" height="3" fill="#d02020"/><rect x="4.5" y="6" width="3.5" height="2.5" fill="#20a0a0"/><line x1="2" y1="3.5" x2="2" y2="8" stroke="#223" stroke-width="0.8"/><line x1="2" y1="7.5" x2="4.5" y2="7.5" stroke="#223" stroke-width="0.8"/></svg><div class="abs" style="left:174px;top:56px;width:58px;height:97px;background:#d4d0c8;border:1px solid;border-color:#e8e6e0 #404040 #404040 #e8e6e0;box-shadow:inset -1px -1px 0 #848078"></div>
<div class="abs" style="left:176px;top:57px;width:54px;height:12px;background:#0a246a;color:#fff;font-weight:bold;font-size:9.5px;line-height:12px;padding-left:2px"><span style="display:inline-block;transform:scaleX(.82);transform-origin:0 0">Ansicht</span></div>
<svg class="abs" style="left:207px;top:60px" width="22" height="7" viewBox="0 0 22 7"><polygon points="0,1 7,1 3.5,5.5" fill="#fff"/><path d="M14.5,0.5 L20,6 M20,0.5 L14.5,6" stroke="#fff" stroke-width="1.4"/></svg>
<svg class="abs" style="left:178px;top:71.5px;" width="11" height="11" viewBox="0 0 11 11"><line x1="5.5" y1="0" x2="5.5" y2="4" stroke="#d02020" stroke-width="1"/><line x1="2" y1="1" x2="5" y2="1" stroke="#223" stroke-width="1"/><ellipse cx="5.5" cy="7.5" rx="4.5" ry="3" fill="#40c8c8" stroke="#223" stroke-width="0.7"/><circle cx="5.5" cy="7.5" r="1.3" fill="#fff" stroke="#223" stroke-width="0.5"/></svg>
<svg class="abs" style="left:191px;top:71.5px;" width="11" height="11" viewBox="0 0 11 11"><line x1="5.5" y1="0" x2="5.5" y2="4" stroke="#d02020" stroke-width="1"/><line x1="2" y1="1" x2="5" y2="1" stroke="#2233cc" stroke-width="1"/><ellipse cx="5.5" cy="7.5" rx="4.5" ry="3" fill="#40c8c8" stroke="#223" stroke-width="0.7"/><circle cx="5.5" cy="7.5" r="1.3" fill="#fff" stroke="#223" stroke-width="0.5"/></svg>
<svg class="abs" style="left:204px;top:71.5px;" width="11" height="11" viewBox="0 0 11 11"><line x1="5.5" y1="0" x2="5.5" y2="4" stroke="#d02020" stroke-width="1"/><line x1="2" y1="1" x2="5" y2="1" stroke="#223" stroke-width="1"/><ellipse cx="5.5" cy="7.5" rx="4.5" ry="3" fill="#40c8c8" stroke="#223" stroke-width="0.7"/><circle cx="5.5" cy="7.5" r="1.3" fill="#fff" stroke="#223" stroke-width="0.5"/></svg>
<svg class="abs" style="left:217px;top:71.5px;" width="11" height="11" viewBox="0 0 11 11"><line x1="5.5" y1="0" x2="5.5" y2="4" stroke="#d02020" stroke-width="1"/><line x1="2" y1="1" x2="5" y2="1" stroke="#d02020" stroke-width="1"/><ellipse cx="5.5" cy="7.5" rx="4.5" ry="3" fill="#40c8c8" stroke="#223" stroke-width="0.7"/><circle cx="5.5" cy="7.5" r="1.3" fill="#fff" stroke="#223" stroke-width="0.5"/></svg>
<svg class="abs" style="left:178px;top:87.7px;" width="11" height="11" viewBox="0 0 11 11"><line x1="4" y1="0.5" x2="4" y2="8" stroke="#2233cc" stroke-width="1.4"/><line x1="1" y1="9" x2="10" y2="9" stroke="#d02020" stroke-width="1.8"/><circle cx="8" cy="7" r="1.6" fill="#d02020"/><circle cx="2" cy="8" r="1.3" fill="#208020"/></svg>
<svg class="abs" style="left:191px;top:87.7px;" width="11" height="11" viewBox="0 0 11 11"><circle cx="5" cy="4.5" r="3.6" fill="#c8f0f0" stroke="#30a0a0" stroke-width="1"/><line x1="7.5" y1="7.5" x2="10.5" y2="10.5" stroke="#222" stroke-width="1.6"/><line x1="1" y1="8.5" x2="4" y2="8.5" stroke="#000" stroke-width="1"/><line x1="2.5" y1="7" x2="2.5" y2="10" stroke="#000" stroke-width="1"/></svg>
<svg class="abs" style="left:204px;top:87.7px;" width="11" height="11" viewBox="0 0 11 11"><circle cx="5" cy="4.5" r="3.6" fill="#c8f0f0" stroke="#30a0a0" stroke-width="1"/><line x1="7.5" y1="7.5" x2="10.5" y2="10.5" stroke="#222" stroke-width="1.6"/><rect x="0.5" y="7.5" width="4" height="2" fill="#fff" stroke="#222" stroke-width="0.6"/></svg>
<svg class="abs" style="left:217px;top:87.7px;" width="11" height="11" viewBox="0 0 11 11"><circle cx="5" cy="4.5" r="3.6" fill="#c8f0f0" stroke="#30a0a0" stroke-width="1"/><line x1="7.5" y1="7.5" x2="10.5" y2="10.5" stroke="#222" stroke-width="1.6"/><rect x="0.5" y="5" width="5" height="5" fill="#fff" stroke="#222" stroke-width="0.6"/></svg>
<svg class="abs" style="left:178px;top:103.9px;" width="11" height="11" viewBox="0 0 11 11"><circle cx="5" cy="4.5" r="3.6" fill="#c8f0f0" stroke="#30a0a0" stroke-width="1"/><line x1="7.5" y1="7.5" x2="10.5" y2="10.5" stroke="#222" stroke-width="1.6"/><line x1="0.5" y1="9.5" x2="6" y2="9.5" stroke="#000" stroke-width="1"/></svg>
<svg class="abs" style="left:191px;top:103.9px;" width="11" height="11" viewBox="0 0 11 11"><circle cx="5" cy="4.5" r="3.6" fill="#e8e6e0" stroke="#a8a49c" stroke-width="1"/><line x1="7.5" y1="7.5" x2="10" y2="10.5" stroke="#a8a49c" stroke-width="1.4"/><line x1="3" y1="8" x2="3" y2="10.5" stroke="#a8a49c" stroke-width="1"/></svg>
<svg class="abs" style="left:204px;top:103.9px;" width="11" height="11" viewBox="0 0 11 11"><polygon points="1,4 3.5,1.5 10,1.5 10,7.5 7.5,10 1,10" fill="#8a8a10" stroke="#221" stroke-width="0.6"/><rect x="1" y="4" width="6.5" height="6" fill="#e8e050" stroke="#221" stroke-width="0.6"/><line x1="1" y1="1" x2="4" y2="4" stroke="#d02020" stroke-width="1"/></svg>
<svg class="abs" style="left:217px;top:103.9px;" width="11" height="11" viewBox="0 0 11 11"><circle cx="5.5" cy="4" r="3" fill="#f0e020" stroke="#665" stroke-width="0.8"/><rect x="4.2" y="7" width="2.6" height="3" fill="#2233aa"/></svg>
<div class="abs" style="left:177px;top:117.5px;width:52px;height:2px;border-top:1px solid #848078;border-bottom:1px solid #fff"></div>
<svg class="abs" style="left:178px;top:121.5px;" width="12" height="11" viewBox="0 0 12 11"><rect x="0.5" y="3.5" width="9" height="7" fill="#b03030" stroke="#223" stroke-width="0.6"/><rect x="1.5" y="5.5" width="7" height="2" fill="#e8e6e0"/><path d="M5,3 A3.5,3 0 1 1 10,5" fill="none" stroke="#2233cc" stroke-width="1.2"/></svg>
<svg class="abs" style="left:191.5px;top:121.5px;" width="12" height="11" viewBox="0 0 12 11"><rect x="0.5" y="3.5" width="9" height="7" fill="#d4d0c8" stroke="#a8a49c" stroke-width="0.6"/><rect x="2" y="5.5" width="6" height="2" fill="#e8e6e0" stroke="#a8a49c" stroke-width="0.6"/><path d="M5,3 A3.5,3 0 1 1 10,5" fill="none" stroke="#a8a49c" stroke-width="1.1"/></svg>
<div class="abs" style="left:205.5px;top:121px;width:2px;height:12px;border-left:1px solid #848078;border-right:1px solid #fff"></div>
<svg class="abs" style="left:210px;top:122px;" width="11" height="11" viewBox="0 0 11 11"><rect x="0.5" y="0.5" width="9" height="9.5" fill="#e8e050" stroke="#443" stroke-width="0.6"/><path d="M7.5,3.2 H3.5 V7.3 H7.5" fill="none" stroke="#332" stroke-width="1.4"/></svg>
<svg class="abs" style="left:178px;top:138.5px;" width="12" height="11" viewBox="0 0 12 11"><polygon points="0.5,3 3,0.5 11,0.5 11,7.5 8.5,10 0.5,10" fill="#2030a0" stroke="#101850" stroke-width="0.6"/><rect x="0.5" y="3" width="8" height="7" fill="#fff" stroke="#101850" stroke-width="0.6"/><line x1="2" y1="9" x2="6.5" y2="4" stroke="#223" stroke-width="1"/><rect x="3" y="4.5" width="3" height="1.5" fill="#e8d020"/></svg><svg class="abs" style="left:195px;top:585px" width="34" height="38" viewBox="0 0 34 38"><line x1="9.5" y1="23" x2="9.5" y2="6.5" stroke="#3a3ac8" stroke-width="1"/><line x1="9.5" y1="23" x2="23.7" y2="28" stroke="#d03030" stroke-width="1"/><line x1="9.5" y1="23" x2="19" y2="15" stroke="#40c040" stroke-width="1"/><text x="10.8" y="12" font-size="5" font-weight="bold" fill="#3a3ac8" font-family="Liberation Sans,sans-serif">Z</text><text x="20" y="20" font-size="5" font-weight="bold" fill="#40c040" font-family="Liberation Sans,sans-serif">Y</text><text x="25" y="33" font-size="5" font-weight="bold" fill="#d03030" font-family="Liberation Sans,sans-serif">X</text></svg>
</body></html>
